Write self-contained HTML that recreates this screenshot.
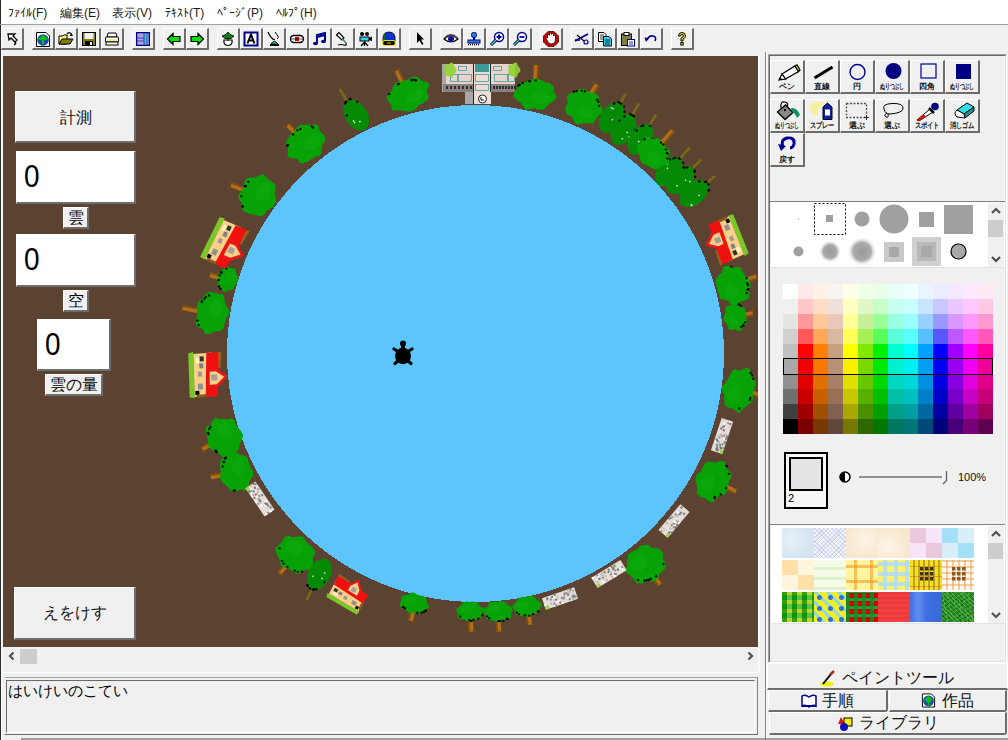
<!DOCTYPE html><html><head><meta charset="utf-8"><style>
*{margin:0;padding:0;box-sizing:border-box}
html,body{width:1008px;height:740px;overflow:hidden;background:#f0f0f0;font-family:"Liberation Sans",sans-serif;position:relative}
div{position:absolute}
.mi{top:6px;font-size:12px;color:#1a1a1a;white-space:nowrap;line-height:14px}
.tb{top:28px;width:23px;height:22px;background:#f0f0f0;border-style:solid;border-width:1px 2px 2px 1px;border-color:#fff #6d6d6d #6d6d6d #fff}
.tb svg{position:absolute;left:2px;top:2px}
.b3{background:#f0f0f0;border-style:solid;border-width:1px 2px 2px 1px;border-color:#fff #6d6d6d #6d6d6d #fff}
.tbox{background:#fff;border-style:solid;border-width:1px 2px 2px 1px;border-color:#fff #6d6d6d #6d6d6d #fff}
.lbl{font-size:16px;color:#000;text-align:center;line-height:21px}
.zero{font-size:31px;color:#000;line-height:30px;transform:scaleX(0.9);transform-origin:0 0}
.tool{width:35px;height:34px;background:#f0f0f0;border-style:solid;border-width:1px 2px 2px 1px;border-color:#fff #6d6d6d #6d6d6d #fff}
.tool svg{position:absolute;left:6px;top:1px;overflow:visible}
.tl{position:absolute;left:0px;width:32px;top:20px;text-align:center;font-size:8px;font-weight:bold;color:#111;line-height:11px;white-space:nowrap}.tl span{position:absolute;left:50%;top:0;white-space:nowrap}
.tab{background:#f0f0f0;border-style:solid;border-color:#fff #6d6d6d #6d6d6d #fff;font-size:16px;color:#111;line-height:20px;white-space:nowrap}
</style></head><body>
<div style="left:0;top:0;width:1px;height:740px;background:#2a2a2a"></div>
<div style="left:1px;top:25px;width:1px;height:715px;background:#fff"></div>
<div style="left:1px;top:0;width:1007px;height:24px;background:#fff"></div>
<div style="left:0;top:24px;width:1008px;height:1px;background:#a0a0a0"></div>
<div class="mi" style="left:8px;width:46px;overflow:hidden">ﾌｧｲﾙ(F)</div>
<div class="mi" style="left:60px;width:46px;overflow:hidden">編集(E)</div>
<div class="mi" style="left:112px;width:46px;overflow:hidden">表示(V)</div>
<div class="mi" style="left:165px;width:46px;overflow:hidden">ﾃｷｽﾄ(T)</div>
<div class="mi" style="left:217px;width:52px;overflow:hidden">ﾍﾟｰｼﾞ(P)</div>
<div class="mi" style="left:276px;width:46px;overflow:hidden">ﾍﾙﾌﾟ(H)</div>
<div class="tb" style="left:1px"><svg width="16" height="16" viewBox="0 0 16 16"><path d="M4 3 L11 3 L9 5 L13 9 L11 11 L7 7 L5 9 Z" fill="#fff" stroke="#000" stroke-width="1.3"/><path d="M11 11 Q13 12 10 14" fill="none" stroke="#000" stroke-width="1.3"/></svg></div>
<div class="tb" style="left:32px"><svg width="16" height="16" viewBox="0 0 16 16"><path d="M1.5 1.5 H11 L14.5 5 V15.5 H1.5 Z" fill="#fff" stroke="#000"/><circle cx="8" cy="9" r="5.8" fill="#1a4fb0"/><path d="M2.5 8 Q5 6 8 4 Q11 6 13.5 8 Q11 9 9 9 V13 H7 V9 Q5 9 2.5 8Z" fill="#10c010"/></svg></div>
<div class="tb" style="left:55px"><svg width="16" height="16" viewBox="0 0 16 16"><path d="M1 5 H5 L6 4 H9 V13 H1 Z" fill="#ffff80" stroke="#000"/><path d="M1 13 L4 8 H15 L12 13 Z" fill="#808000" stroke="#000"/><path d="M9 3 Q12 0 14 4" fill="none" stroke="#000" stroke-width="1.2"/><path d="M13 2 L15 5 L12 5 Z" fill="#000"/></svg></div>
<div class="tb" style="left:78px"><svg width="16" height="16" viewBox="0 0 16 16"><rect x="1.5" y="1.5" width="13" height="13" fill="#808000" stroke="#000"/><rect x="3.5" y="2" width="9" height="6" fill="#f0f0f0"/><rect x="4" y="10" width="8" height="4.5" fill="#000"/><rect x="9" y="11" width="2" height="3" fill="#f0f0f0"/></svg></div>
<div class="tb" style="left:101px"><svg width="16" height="16" viewBox="0 0 16 16"><path d="M4 2 H12 L13 6 H3 Z" fill="#fff" stroke="#000"/><rect x="1.5" y="6" width="13" height="5" rx="1" fill="#fff" stroke="#000"/><rect x="3" y="8.5" width="10" height="1" fill="#e0e000"/><rect x="2" y="11" width="12" height="3" fill="#fff" stroke="#000"/></svg></div>
<div class="tb" style="left:132px"><svg width="16" height="16" viewBox="0 0 16 16"><rect x="1.5" y="1.5" width="13" height="13" fill="#4040a0" stroke="#000080"/><rect x="2.5" y="2.5" width="6" height="4" fill="#b0a0f0"/><rect x="2.5" y="7.5" width="6" height="2" fill="#b0a0f0"/><rect x="2.5" y="10.5" width="6" height="3" fill="#b0a0f0"/><rect x="9.5" y="2.5" width="2" height="11" fill="#30c0f0"/><rect x="12" y="2.5" width="2" height="11" fill="#7080c0"/></svg></div>
<div class="tb" style="left:163px"><svg width="16" height="16" viewBox="0 0 16 16"><path d="M1.5 8 L7 2.5 V5.5 H14 V10.5 H7 V13.5 Z" fill="#00e000" stroke="#000" stroke-width="1.2"/></svg></div>
<div class="tb" style="left:186px"><svg width="16" height="16" viewBox="0 0 16 16"><path d="M14.5 8 L9 2.5 V5.5 H2 V10.5 H9 V13.5 Z" fill="#00e000" stroke="#000" stroke-width="1.2"/></svg></div>
<div class="tb" style="left:217px"><svg width="16" height="16" viewBox="0 0 16 16"><path d="M8 1 L10 3.5 L14 5 L11 7.5 H5 L2 5 L6 3.5 Z" fill="#108010" stroke="#000" stroke-width="0.8"/><path d="M4 9 Q3 14 8 14.5 Q13 14 12 9 Z" fill="#fff" stroke="#000" stroke-width="1.2"/><path d="M8 7 V10" stroke="#000"/></svg></div>
<div class="tb" style="left:240px"><svg width="16" height="16" viewBox="0 0 16 16"><rect x="1.5" y="1.5" width="13" height="13" fill="#fff" stroke="#000090" stroke-width="2"/><path d="M4.5 12.5 L8 3.5 L11.5 12.5 M6 9.5 H10" fill="none" stroke="#000" stroke-width="2"/></svg></div>
<div class="tb" style="left:263px"><svg width="16" height="16" viewBox="0 0 16 16"><path d="M2 1 Q5 8 9 9" fill="none" stroke="#000" stroke-width="1.2"/><path d="M9 1 L12 5 Q13 7 11 8" fill="none" stroke="#000"/><path d="M5 13 Q8 8 12 13 Z" fill="#30d0f0" stroke="#000"/><rect x="4" y="13" width="9" height="2" fill="#000"/></svg></div>
<div class="tb" style="left:286px"><svg width="16" height="16" viewBox="0 0 16 16"><rect x="1.5" y="4.5" width="13" height="7" rx="3.5" fill="#fff" stroke="#000" stroke-width="1.4"/><rect x="6" y="6" width="4" height="4" fill="#e00000"/><path d="M1.5 8 H14.5" stroke="#000" stroke-width="0.7"/></svg></div>
<div class="tb" style="left:309px"><svg width="16" height="16" viewBox="0 0 16 16"><path d="M5 12 V4 L13 2 V10" fill="none" stroke="#000090" stroke-width="2"/><ellipse cx="3.5" cy="12.5" rx="2.5" ry="1.8" fill="#000090"/><ellipse cx="11.5" cy="10.5" rx="2.5" ry="1.8" fill="#000090"/><path d="M5 6 L13 4" stroke="#000090" stroke-width="2"/></svg></div>
<div class="tb" style="left:332px"><svg width="16" height="16" viewBox="0 0 16 16"><path d="M1.5 4 L4 1.5 L9 7 L7 9 Z" fill="#fff" stroke="#000" stroke-width="1.2"/><path d="M7.5 8 L11 12" stroke="#3080a0" stroke-width="1.5"/><path d="M11 12 Q12 15 9 14 Q6 13 3 14" fill="none" stroke="#000" stroke-width="1.2"/></svg></div>
<div class="tb" style="left:355px"><svg width="16" height="16" viewBox="0 0 16 16"><circle cx="4" cy="3" r="2" fill="#000"/><circle cx="9" cy="3" r="2" fill="#000"/><rect x="2" y="6" width="9" height="4" fill="#30d0f0" stroke="#000"/><path d="M11 7 L14 5.5 V10 L11 9 Z" fill="#000"/><path d="M6.5 10 V15 M6.5 11 L3 15 M6.5 11 L10 15" stroke="#000" stroke-width="1.2"/></svg></div>
<div class="tb" style="left:378px"><svg width="16" height="16" viewBox="0 0 16 16"><path d="M2 10 Q1 1 8 1 Q15 1 14 10 Z" fill="#1030d0" stroke="#000" stroke-width="0.8"/><path d="M2 9 Q1.5 4 4 3 V9 Z" fill="#107010"/><rect x="1.5" y="9.5" width="13" height="5" rx="2.5" fill="#000" stroke="#e8e000" stroke-width="1.2"/><rect x="6" y="11.5" width="4" height="1" fill="#e8e000"/></svg></div>
<div class="tb" style="left:409px"><svg width="16" height="16" viewBox="0 0 16 16"><path d="M5 1 L5 12 L7.5 9.5 L10 14 L11.5 13 L9 8.5 L12 8.5 Z" fill="#000"/></svg></div>
<div class="tb" style="left:440px"><svg width="16" height="16" viewBox="0 0 16 16"><path d="M1 8 Q8 1 15 8 Q8 14 1 8 Z" fill="#fff" stroke="#000" stroke-width="1.2"/><circle cx="8" cy="8" r="3" fill="#1010a0"/><path d="M2 7 Q8 1 14 7" fill="none" stroke="#404040" stroke-width="2"/></svg></div>
<div class="tb" style="left:463px"><svg width="16" height="16" viewBox="0 0 16 16"><rect x="5.5" y="1.5" width="5" height="5" rx="2" fill="#3080d0" stroke="#000090"/><rect x="7" y="6" width="2" height="3" fill="#000090"/><rect x="2" y="9" width="12" height="3" fill="#3080d0" stroke="#000090"/><path d="M2 13.5 H14" stroke="#000" stroke-width="1.5" stroke-dasharray="1 1"/></svg></div>
<div class="tb" style="left:486px"><svg width="16" height="16" viewBox="0 0 16 16"><circle cx="10" cy="6" r="4.5" fill="#fff" stroke="#000090" stroke-width="1.5"/><path d="M7.5 6 H12.5 M10 3.5 V8.5" stroke="#000090" stroke-width="1.8"/><path d="M7 9 L2 14" stroke="#000" stroke-width="3"/><path d="M7 9 L2 14" stroke="#30c0f0" stroke-width="1.5"/></svg></div>
<div class="tb" style="left:509px"><svg width="16" height="16" viewBox="0 0 16 16"><circle cx="10" cy="6" r="4.5" fill="#fff" stroke="#000090" stroke-width="1.5"/><path d="M7.5 6 H12.5" stroke="#000090" stroke-width="1.8"/><path d="M7 9 L2 14" stroke="#000" stroke-width="3"/><path d="M7 9 L2 14" stroke="#30c0f0" stroke-width="1.5"/></svg></div>
<div class="tb" style="left:540px"><svg width="16" height="16" viewBox="0 0 16 16"><path d="M5 0.5 H11 L15.5 5 V11 L11 15.5 H5 L0.5 11 V5 Z" fill="#d00000" stroke="#400" stroke-width="0.8"/><path d="M4.5 7 V4.5 Q4.5 3.5 5.5 3.5 Q6.5 3.5 6.5 4.5 V3 Q6.5 2 7.5 2 Q8.5 2 8.5 3 V3.5 Q8.5 2.5 9.5 2.5 Q10.5 2.5 10.5 3.5 V5 Q10.5 4 11.5 4 Q12.5 4 12.5 5 V9 Q12.5 13 8.5 13 Q5 13 4.5 10 L3 7.5 Q3 6.5 4.5 7Z" fill="#fff" stroke="#000" stroke-width="0.8"/></svg></div>
<div class="tb" style="left:571px"><svg width="16" height="16" viewBox="0 0 16 16"><path d="M1 10 L14 3" stroke="#000090" stroke-width="1.8"/><path d="M3 4 L10 10" stroke="#000" stroke-width="1.2"/><circle cx="12" cy="11" r="2" fill="none" stroke="#000090" stroke-width="1.2"/><path d="M1 9 L6 9" stroke="#000090" stroke-width="1.5"/></svg></div>
<div class="tb" style="left:594px"><svg width="16" height="16" viewBox="0 0 16 16"><path d="M1.5 1.5 H7 L9 3.5 V10.5 H1.5 Z" fill="#fff" stroke="#000"/><path d="M3 4 H7 M3 6 H7 M3 8 H7" stroke="#000" stroke-width="0.8"/><path d="M6.5 5.5 H12 L14.5 8 V15 H6.5 Z" fill="#30d0f0" stroke="#000"/><path d="M8 9 H13 M8 11 H13 M8 13 H13" stroke="#000" stroke-width="0.8"/></svg></div>
<div class="tb" style="left:617px"><svg width="16" height="16" viewBox="0 0 16 16"><rect x="1.5" y="3" width="10" height="11.5" fill="#808040" stroke="#000"/><rect x="4" y="1.5" width="5" height="3" fill="#fff" stroke="#000"/><rect x="7.5" y="8.5" width="7" height="6.5" fill="#fff" stroke="#000090"/><path d="M9 11 H13 M9 13 H13" stroke="#000090" stroke-width="0.8"/></svg></div>
<div class="tb" style="left:640px"><svg width="16" height="16" viewBox="0 0 16 16"><path d="M4 9 Q6 4 10 5 Q14 6 12 10" fill="none" stroke="#000090" stroke-width="1.6"/><path d="M1.5 6.5 L6 7 L3 11 Z" fill="#000090"/></svg></div>
<div class="tb" style="left:671px"><svg width="16" height="16" viewBox="0 0 16 16"><path d="M4.5 5 Q4.5 1.5 8 1.5 Q11.5 1.5 11.5 5 Q11.5 7 9 8 V10 H7 V7 Q9.5 6 9.5 5 Q9.5 3.5 8 3.5 Q6.5 3.5 6.5 5 Z" fill="#f0f000" stroke="#000" stroke-width="1"/><rect x="6.8" y="11.5" width="2.4" height="2.5" fill="#f0f000" stroke="#000"/></svg></div>
<div style="left:3px;top:56px;width:755px;height:591px;background:#5c4331;overflow:hidden">
<svg style="position:absolute;left:0;top:0" width="755" height="591" viewBox="3 56 755 591">
<circle cx="475.5" cy="353.5" r="248.5" fill="#5dc5fe" shape-rendering="crispEdges"/>
<rect x="442" y="64" width="73" height="28" fill="#e8d4cc"/><rect x="442" y="64" width="4" height="28" fill="#a8a8a8"/><rect x="443" y="84" width="72" height="8" fill="#8a8080"/><rect x="446" y="86" width="2" height="3" fill="#303030"/><rect x="493" y="86" width="2" height="3" fill="#303030"/><rect x="450" y="86" width="2" height="3" fill="#303030"/><rect x="496" y="86" width="2" height="3" fill="#303030"/><rect x="454" y="86" width="2" height="3" fill="#303030"/><rect x="499" y="86" width="2" height="3" fill="#303030"/><rect x="458" y="86" width="2" height="3" fill="#303030"/><rect x="502" y="86" width="2" height="3" fill="#303030"/><rect x="462" y="86" width="2" height="3" fill="#303030"/><rect x="505" y="86" width="2" height="3" fill="#303030"/><rect x="466" y="86" width="2" height="3" fill="#303030"/><rect x="508" y="86" width="2" height="3" fill="#303030"/><rect x="470" y="86" width="2" height="3" fill="#303030"/><rect x="511" y="86" width="2" height="3" fill="#303030"/><rect x="474" y="86" width="2" height="3" fill="#303030"/><rect x="514" y="86" width="2" height="3" fill="#303030"/><g fill="none" stroke="#4a9a9a" stroke-width="0.8"><rect x="458.5" y="66.5" width="8" height="4"/><rect x="450.5" y="74.5" width="7" height="7"/><rect x="458.5" y="74.5" width="13" height="7"/><rect x="493.5" y="66.5" width="8" height="4"/><rect x="494.5" y="74.5" width="13" height="7"/><rect x="508.5" y="74.5" width="6" height="7"/></g><rect x="465" y="92" width="8" height="12" fill="#a8a8a8"/><rect x="473" y="64" width="18" height="40" fill="#ecdcd4"/><rect x="473" y="64" width="1" height="40" fill="#202020"/><rect x="490" y="64" width="1" height="28" fill="#202020"/><rect x="475" y="64" width="14" height="8" fill="#3a9a9a"/><circle cx="482.5" cy="99" r="4" fill="#fff" stroke="#222" stroke-width="1"/><g fill="none" stroke="#4a9a9a" stroke-width="0.8"><rect x="475.5" y="74.5" width="13" height="7"/><rect x="475.5" y="84.5" width="13" height="6"/></g><path d="M481 97 L481 100 L484 100" stroke="#000" fill="none"/><path d="M456.7 70.0 L456.2 71.6 L455.1 72.9 L454.2 73.9 L453.5 75.1 L452.7 76.6 L451.5 77.8 L450.0 77.0 L448.8 76.0 L447.6 75.9 L446.2 75.5 L444.7 75.0 L444.1 73.3 L444.3 71.5 L444.9 70.0 L444.5 68.5 L444.1 66.7 L444.7 65.1 L446.0 64.2 L447.6 64.1 L448.9 64.2 L450.0 63.0 L451.5 62.5 L452.8 63.1 L453.6 64.8 L454.3 66.0 L454.9 67.2 L456.2 68.4Z" fill="#90d030" opacity="0.9"/><path d="M520.5 70.0 L520.2 71.7 L518.9 72.8 L518.0 73.7 L517.5 75.2 L516.9 77.0 L515.5 77.8 L514.0 77.3 L512.8 76.0 L511.7 75.7 L510.3 75.4 L508.9 74.7 L508.3 73.2 L508.5 71.5 L508.5 70.0 L508.4 68.5 L508.2 66.7 L508.6 65.0 L510.2 64.4 L511.6 64.3 L512.8 63.9 L514.0 63.0 L515.5 62.3 L516.9 62.9 L517.6 64.7 L518.2 66.1 L519.0 67.2 L520.1 68.4Z" fill="#90d030" opacity="0.9"/>
<g transform="translate(408.0,94.0) rotate(-205.3)"><path d="M-2.5 0 L2.5 0 L2.5 26.2 L-2.5 26.2Z" fill="#b06e18"/><path d="M-2.5 6.6 L-1 6.6 L-1 26.2 L-2.5 26.2Z" fill="#7a4a10"/><path d="M2 25.2 L5 27.2" stroke="#7a4a10" stroke-width="1.5"/><path d="M20.5 0.0 L20.7 2.0 L21.2 4.2 L20.8 6.5 L18.3 8.0 L15.9 9.3 L12.8 10.0 L11.2 11.8 L9.3 13.7 L6.7 15.4 L3.2 15.0 L0.0 13.9 L-2.9 13.7 L-5.8 13.4 L-8.9 13.1 L-12.7 13.4 L-15.4 12.0 L-16.5 9.7 L-17.5 7.6 L-18.0 5.6 L-20.8 4.1 L-23.1 2.2 L-23.1 0.0 L-21.5 -2.4 L-18.9 -4.3 L-18.0 -6.3 L-17.7 -8.8 L-17.4 -11.6 L-15.5 -13.8 L-11.9 -14.3 L-8.9 -14.9 L-5.5 -14.4 L-3.0 -16.0 L-0.0 -17.0 L3.1 -16.8 L6.4 -16.9 L8.7 -14.7 L11.1 -13.3 L13.4 -11.9 L15.6 -10.4 L19.1 -9.5 L21.3 -7.5 L20.2 -4.6 L19.7 -2.2Z" fill="#06a206"/><path d="M9.8 0.0 L8.9 0.8 L8.9 1.6 L8.1 2.2 L8.4 3.2 L8.0 4.2 L6.4 4.4 L5.1 4.8 L3.8 5.0 L2.5 5.1 L1.4 5.8 L0.0 6.3 L-1.4 6.1 L-2.8 5.6 L-3.6 4.8 L-4.8 4.5 L-6.1 4.2 L-7.7 4.0 L-8.9 3.5 L-9.0 2.5 L-9.0 1.6 L-8.8 0.8 L-9.6 0.0 L-9.6 -0.9 L-9.7 -2.0 L-9.2 -2.9 L-8.0 -3.5 L-6.7 -4.0 L-5.8 -4.6 L-5.2 -5.6 L-4.2 -6.3 L-2.8 -6.5 L-1.4 -6.6 L-0.0 -6.0 L1.3 -6.4 L2.8 -6.6 L4.1 -6.2 L5.5 -5.8 L6.3 -5.0 L6.6 -3.9 L7.5 -3.3 L8.9 -2.8 L9.4 -1.9 L10.3 -1.0Z" transform="translate(-5.1,-4.0)" fill="#12b212" opacity="0.4"/><rect x="16" y="7" width="2" height="2" fill="#000"/><rect x="3" y="12" width="2" height="2" fill="#000"/><rect x="-13" y="9" width="2" height="2" fill="#000"/><rect x="-10" y="10" width="2" height="2" fill="#000"/><rect x="-11" y="10" width="2" height="2" fill="#000"/><rect x="4" y="12" width="2" height="2" fill="#000"/><rect x="-14" y="8" width="2" height="2" fill="#000"/></g>
<g transform="translate(305.0,142.5) rotate(-223.8)"><path d="M-2.5 0 L2.5 0 L2.5 24.6 L-2.5 24.6Z" fill="#b06e18"/><path d="M-2.5 7.4 L-1 7.4 L-1 24.6 L-2.5 24.6Z" fill="#7a4a10"/><path d="M2 23.6 L5 25.6" stroke="#7a4a10" stroke-width="1.5"/><path d="M22.0 0.0 L22.0 2.5 L19.6 4.6 L17.7 6.5 L15.9 8.2 L15.1 10.4 L14.1 13.0 L11.4 14.2 L8.5 14.9 L5.8 15.6 L2.7 14.9 L0.0 15.8 L-2.8 15.7 L-6.1 16.6 L-9.1 15.9 L-10.7 13.3 L-13.0 12.0 L-15.0 10.4 L-16.5 8.4 L-18.9 6.9 L-20.9 4.9 L-21.2 2.4 L-19.2 0.0 L-18.4 -2.4 L-19.0 -5.1 L-18.7 -7.7 L-18.0 -10.5 L-15.8 -12.4 L-12.9 -13.5 L-10.0 -14.1 L-7.9 -15.8 L-5.8 -17.8 L-3.1 -19.5 L-0.0 -19.1 L2.7 -17.3 L5.5 -17.1 L8.0 -16.0 L11.2 -15.8 L13.9 -14.5 L17.0 -13.3 L17.7 -10.3 L16.9 -7.0 L18.0 -4.8 L20.3 -2.6Z" fill="#06a206"/><path d="M8.9 0.0 L8.5 0.9 L8.1 1.7 L8.6 2.8 L8.4 3.8 L7.4 4.6 L5.8 4.8 L4.7 5.2 L3.5 5.5 L2.5 6.1 L1.4 7.0 L0.0 7.2 L-1.3 6.3 L-2.5 6.1 L-3.6 5.6 L-4.8 5.3 L-6.1 5.0 L-7.5 4.6 L-8.0 3.6 L-8.2 2.7 L-8.3 1.7 L-8.4 0.9 L-9.6 0.0 L-10.0 -1.2 L-9.6 -2.3 L-8.3 -3.1 L-6.9 -3.6 L-6.3 -4.4 L-5.8 -5.4 L-5.4 -6.8 L-4.0 -7.1 L-2.6 -7.1 L-1.3 -7.2 L-0.0 -6.8 L1.3 -7.2 L2.7 -7.4 L3.9 -7.0 L5.1 -6.4 L5.9 -5.5 L6.3 -4.4 L7.3 -3.8 L8.5 -3.1 L9.1 -2.2 L9.5 -1.1Z" transform="translate(-4.9,-4.4)" fill="#12b212" opacity="0.4"/><rect x="-4" y="13" width="2" height="2" fill="#000"/><rect x="14" y="9" width="2" height="2" fill="#000"/><rect x="-17" y="4" width="2" height="2" fill="#000"/><rect x="-17" y="6" width="2" height="2" fill="#000"/><rect x="2" y="13" width="2" height="2" fill="#000"/><rect x="-7" y="12" width="2" height="2" fill="#000"/><rect x="13" y="9" width="2" height="2" fill="#000"/></g>
<g transform="translate(257.0,195.0) rotate(-248.2)"><path d="M-2.5 0 L2.5 0 L2.5 28.0 L-2.5 28.0Z" fill="#b06e18"/><path d="M-2.5 7.6 L-1 7.6 L-1 28.0 L-2.5 28.0Z" fill="#7a4a10"/><path d="M2 27.0 L5 29.0" stroke="#7a4a10" stroke-width="1.5"/><path d="M20.4 0.0 L20.1 2.4 L20.3 4.9 L19.9 7.4 L17.1 9.0 L14.6 10.4 L12.5 11.8 L11.3 14.3 L9.1 16.3 L6.1 17.1 L2.8 16.1 L0.0 15.6 L-2.7 15.4 L-5.8 16.2 L-9.3 16.6 L-12.2 15.5 L-13.6 12.9 L-14.6 10.4 L-15.7 8.2 L-17.4 6.5 L-19.6 4.7 L-21.5 2.5 L-20.8 0.0 L-19.4 -2.6 L-18.8 -5.1 L-17.8 -7.6 L-17.6 -10.5 L-16.1 -13.0 L-13.5 -14.6 L-10.7 -15.6 L-7.7 -15.7 L-5.4 -17.2 L-3.0 -19.6 L-0.0 -20.4 L3.0 -19.5 L6.0 -19.0 L8.2 -16.8 L10.5 -15.2 L13.6 -14.6 L16.5 -13.3 L18.7 -11.2 L18.9 -8.0 L19.6 -5.3 L19.5 -2.6Z" fill="#06a206"/><path d="M9.5 0.0 L9.1 0.9 L8.2 1.7 L8.0 2.7 L8.0 3.7 L7.2 4.6 L6.3 5.3 L4.9 5.6 L3.6 5.8 L2.4 5.9 L1.3 6.6 L0.0 6.9 L-1.4 7.2 L-2.6 6.5 L-3.4 5.5 L-4.8 5.5 L-6.2 5.2 L-7.4 4.7 L-8.3 3.9 L-8.3 2.8 L-8.1 1.7 L-8.5 0.9 L-8.6 0.0 L-9.2 -1.1 L-9.2 -2.2 L-8.4 -3.2 L-7.5 -4.0 L-6.4 -4.6 L-5.9 -5.6 L-5.1 -6.5 L-4.1 -7.5 L-2.7 -7.7 L-1.3 -7.5 L-0.0 -7.1 L1.2 -6.9 L2.7 -7.6 L4.2 -7.6 L5.4 -7.0 L6.2 -5.9 L6.5 -4.6 L7.0 -3.7 L8.0 -3.0 L8.9 -2.2 L9.9 -1.2Z" transform="translate(-4.9,-4.6)" fill="#12b212" opacity="0.4"/><rect x="15" y="8" width="2" height="2" fill="#000"/><rect x="-5" y="13" width="2" height="2" fill="#000"/><rect x="15" y="8" width="2" height="2" fill="#000"/><rect x="-10" y="12" width="2" height="2" fill="#000"/><rect x="-5" y="13" width="2" height="2" fill="#000"/><rect x="6" y="13" width="2" height="2" fill="#000"/><rect x="-5" y="13" width="2" height="2" fill="#000"/></g>
<g transform="translate(227.0,279.0) rotate(-256.8)"><path d="M-2.5 0 L2.5 0 L2.5 17.5 L-2.5 17.5Z" fill="#b06e18"/><path d="M-2.5 4.2 L-1 4.2 L-1 17.5 L-2.5 17.5Z" fill="#7a4a10"/><path d="M2 16.5 L5 18.5" stroke="#7a4a10" stroke-width="1.5"/><path d="M13.1 0.0 L12.5 1.4 L11.6 2.6 L10.5 3.6 L9.4 4.6 L9.0 5.9 L8.7 7.6 L6.9 8.1 L5.0 8.2 L3.4 8.7 L1.6 8.5 L0.0 9.4 L-1.8 9.6 L-3.7 9.6 L-5.0 8.3 L-6.4 7.5 L-7.7 6.7 L-9.0 5.9 L-10.9 5.3 L-12.1 4.2 L-11.8 2.6 L-12.0 1.3 L-11.5 0.0 L-11.4 -1.4 L-11.5 -2.9 L-12.2 -4.8 L-10.8 -6.0 L-9.3 -6.9 L-7.7 -7.7 L-6.3 -8.5 L-5.3 -9.9 L-3.6 -10.6 L-1.9 -11.3 L-0.0 -10.6 L1.7 -10.2 L3.3 -9.7 L4.8 -9.1 L6.7 -9.0 L8.4 -8.3 L9.9 -7.3 L9.9 -5.4 L10.5 -4.1 L11.1 -2.8 L12.5 -1.5Z" fill="#06a206"/><path d="M5.7 0.0 L5.3 0.5 L4.8 0.9 L4.7 1.4 L4.8 2.1 L4.4 2.5 L3.8 3.0 L2.9 3.1 L2.1 3.2 L1.5 3.4 L0.8 3.8 L0.0 3.8 L-0.8 3.8 L-1.5 3.4 L-2.2 3.3 L-2.7 2.8 L-3.7 2.9 L-4.3 2.5 L-5.0 2.2 L-5.0 1.5 L-5.0 1.0 L-5.2 0.5 L-5.2 0.0 L-5.5 -0.6 L-5.8 -1.3 L-5.2 -1.8 L-4.3 -2.1 L-4.0 -2.7 L-3.6 -3.2 L-3.0 -3.5 L-2.4 -4.1 L-1.6 -4.1 L-0.8 -4.0 L-0.0 -4.0 L0.7 -3.8 L1.6 -4.1 L2.4 -3.9 L3.1 -3.6 L3.7 -3.3 L3.9 -2.6 L4.3 -2.1 L5.0 -1.7 L5.6 -1.2 L5.8 -0.6Z" transform="translate(-2.9,-2.5)" fill="#12b212" opacity="0.4"/><rect x="-11" y="2" width="2" height="2" fill="#000"/><rect x="2" y="7" width="2" height="2" fill="#000"/><rect x="-6" y="6" width="2" height="2" fill="#000"/><rect x="-6" y="6" width="2" height="2" fill="#000"/><rect x="8" y="5" width="2" height="2" fill="#000"/><rect x="10" y="3" width="2" height="2" fill="#000"/><rect x="-3" y="7" width="2" height="2" fill="#000"/></g>
<g transform="translate(211.0,313.0) rotate(-259.6)"><path d="M-2.5 0 L2.5 0 L2.5 28.9 L-2.5 28.9Z" fill="#b06e18"/><path d="M-2.5 6.8 L-1 6.8 L-1 28.9 L-2.5 28.9Z" fill="#7a4a10"/><path d="M2 27.9 L5 29.9" stroke="#7a4a10" stroke-width="1.5"/><path d="M21.7 0.0 L21.5 2.2 L19.1 4.0 L17.1 5.6 L16.5 7.6 L16.5 10.2 L14.9 12.3 L12.2 13.6 L8.5 13.3 L5.6 13.6 L2.7 13.6 L0.0 14.4 L-3.0 15.1 L-6.2 15.0 L-9.2 14.4 L-11.1 12.3 L-13.1 10.8 L-15.7 9.7 L-17.8 8.2 L-20.1 6.6 L-21.0 4.4 L-20.5 2.1 L-20.1 0.0 L-20.4 -2.4 L-19.8 -4.7 L-20.5 -7.6 L-18.8 -9.8 L-15.7 -11.0 L-12.5 -11.7 L-10.6 -13.4 L-8.4 -14.9 L-6.4 -17.8 L-3.3 -18.4 L-0.0 -17.2 L2.8 -15.7 L5.7 -15.7 L8.6 -15.2 L12.2 -15.4 L15.0 -14.1 L16.3 -11.5 L16.8 -8.8 L17.8 -6.6 L19.2 -4.6 L20.7 -2.4Z" fill="#06a206"/><path d="M10.2 0.0 L9.8 0.9 L9.0 1.7 L7.8 2.3 L7.4 3.0 L7.0 3.9 L6.4 4.7 L5.5 5.4 L3.8 5.2 L2.5 5.4 L1.2 5.4 L0.0 5.9 L-1.4 6.2 L-2.9 6.3 L-4.0 5.6 L-4.6 4.6 L-5.6 4.1 L-6.8 3.7 L-8.5 3.5 L-9.4 2.7 L-9.5 1.8 L-9.2 0.8 L-8.9 0.0 L-9.3 -1.0 L-9.5 -2.0 L-9.0 -3.0 L-8.5 -4.0 L-7.0 -4.4 L-5.9 -4.9 L-4.8 -5.4 L-3.9 -6.2 L-2.8 -6.9 L-1.4 -7.1 L-0.0 -6.7 L1.2 -6.1 L2.5 -6.3 L4.0 -6.3 L5.5 -6.2 L6.7 -5.6 L7.3 -4.6 L7.7 -3.6 L7.7 -2.5 L8.9 -1.9 L9.6 -1.0Z" transform="translate(-5.0,-4.1)" fill="#12b212" opacity="0.4"/><rect x="-18" y="4" width="2" height="2" fill="#000"/><rect x="-16" y="7" width="2" height="2" fill="#000"/><rect x="-11" y="10" width="2" height="2" fill="#000"/><rect x="13" y="9" width="2" height="2" fill="#000"/><rect x="9" y="11" width="2" height="2" fill="#000"/><rect x="-10" y="10" width="2" height="2" fill="#000"/><rect x="-14" y="8" width="2" height="2" fill="#000"/></g>
<g transform="translate(223.0,437.0) rotate(60.3)"><path d="M-2.5 0 L2.5 0 L2.5 24.2 L-2.5 24.2Z" fill="#b06e18"/><path d="M-2.5 7.4 L-1 7.4 L-1 24.2 L-2.5 24.2Z" fill="#7a4a10"/><path d="M2 23.2 L5 25.2" stroke="#7a4a10" stroke-width="1.5"/><path d="M19.0 0.0 L18.3 2.2 L18.6 4.6 L18.5 7.1 L18.0 9.7 L14.7 10.7 L12.4 12.0 L10.1 13.3 L7.7 14.2 L5.7 16.3 L2.9 16.7 L0.0 17.2 L-2.7 15.8 L-5.2 14.7 L-7.6 14.0 L-10.0 13.0 L-13.1 12.7 L-15.4 11.2 L-17.1 9.3 L-17.2 6.6 L-16.8 4.1 L-19.1 2.3 L-19.6 0.0 L-20.7 -2.8 L-18.7 -5.2 L-16.4 -7.1 L-15.7 -9.6 L-13.7 -11.3 L-12.7 -14.0 L-11.6 -17.2 L-8.7 -18.2 L-5.3 -17.2 L-2.7 -17.8 L-0.0 -17.5 L2.8 -18.6 L5.7 -18.4 L8.8 -18.5 L10.7 -15.9 L12.5 -13.7 L14.1 -11.7 L15.7 -9.7 L18.3 -8.0 L19.4 -5.4 L19.2 -2.6Z" fill="#06a206"/><path d="M9.2 0.0 L9.3 1.0 L8.9 2.0 L7.5 2.6 L6.7 3.2 L6.4 4.2 L5.9 5.1 L5.0 5.8 L3.9 6.3 L2.4 6.1 L1.2 6.2 L0.0 5.9 L-1.2 6.3 L-2.7 6.8 L-3.8 6.2 L-4.6 5.4 L-5.5 4.8 L-6.2 4.0 L-7.0 3.4 L-8.4 2.8 L-9.1 2.0 L-8.6 0.9 L-8.5 0.0 L-7.8 -0.9 L-8.0 -2.0 L-7.9 -3.1 L-7.7 -4.2 L-7.1 -5.2 L-5.5 -5.4 L-4.6 -6.0 L-3.4 -6.4 L-2.5 -7.3 L-1.4 -8.0 L-0.0 -7.9 L1.2 -7.1 L2.3 -6.7 L3.4 -6.4 L4.6 -6.0 L5.8 -5.7 L7.2 -5.3 L7.5 -4.1 L7.3 -2.8 L7.8 -1.9 L8.2 -1.0Z" transform="translate(-4.7,-4.4)" fill="#12b212" opacity="0.4"/><rect x="-15" y="7" width="2" height="2" fill="#000"/><rect x="7" y="12" width="2" height="2" fill="#000"/><rect x="-12" y="10" width="2" height="2" fill="#000"/><rect x="-16" y="5" width="2" height="2" fill="#000"/><rect x="9" y="12" width="2" height="2" fill="#000"/><rect x="-11" y="10" width="2" height="2" fill="#000"/><rect x="8" y="12" width="2" height="2" fill="#000"/></g>
<g transform="translate(235.0,472.0) rotate(78.3)"><path d="M-2.5 0 L2.5 0 L2.5 24.7 L-2.5 24.7Z" fill="#b06e18"/><path d="M-2.5 6.8 L-1 6.8 L-1 24.7 L-2.5 24.7Z" fill="#7a4a10"/><path d="M2 23.7 L5 25.7" stroke="#7a4a10" stroke-width="1.5"/><path d="M19.0 0.0 L19.0 2.1 L19.3 4.3 L18.6 6.4 L17.7 8.5 L14.7 9.5 L12.4 10.8 L10.1 11.8 L8.6 14.1 L5.9 15.0 L3.1 16.0 L0.0 15.2 L-2.6 13.8 L-5.3 13.5 L-8.3 13.7 L-11.1 13.0 L-13.9 12.1 L-15.6 10.2 L-15.6 7.5 L-17.3 5.9 L-18.9 4.2 L-21.0 2.3 L-21.0 0.0 L-19.7 -2.4 L-18.9 -4.8 L-17.3 -6.7 L-15.9 -8.8 L-14.9 -11.0 L-13.6 -13.4 L-11.4 -15.2 L-8.0 -15.0 L-5.4 -15.8 L-2.7 -16.0 L-0.0 -16.6 L3.0 -18.1 L5.9 -17.1 L8.6 -16.1 L10.5 -14.0 L12.2 -12.0 L15.0 -11.1 L17.8 -9.8 L19.8 -7.7 L20.3 -5.1 L18.1 -2.2Z" fill="#06a206"/><path d="M8.3 0.0 L9.3 0.9 L9.0 1.8 L8.8 2.7 L7.1 3.0 L6.5 3.8 L5.7 4.4 L5.1 5.3 L4.1 6.0 L2.6 5.9 L1.3 5.8 L0.0 5.7 L-1.2 5.5 L-2.5 5.6 L-3.8 5.6 L-5.3 5.5 L-6.1 4.7 L-6.6 3.8 L-6.8 2.9 L-8.2 2.5 L-9.0 1.8 L-9.3 0.9 L-9.2 0.0 L-8.5 -0.9 L-7.7 -1.7 L-7.8 -2.7 L-7.6 -3.7 L-7.3 -4.8 L-6.4 -5.6 L-4.8 -5.7 L-3.4 -5.7 L-2.5 -6.4 L-1.3 -7.0 L-0.0 -7.2 L1.4 -7.4 L2.4 -6.3 L3.4 -5.7 L4.4 -5.2 L6.0 -5.2 L7.2 -4.7 L8.2 -4.0 L8.2 -2.8 L8.2 -1.8 L8.5 -0.9Z" transform="translate(-4.8,-4.1)" fill="#12b212" opacity="0.4"/><rect x="-9" y="10" width="2" height="2" fill="#000"/><rect x="-16" y="6" width="2" height="2" fill="#000"/><rect x="17" y="3" width="2" height="2" fill="#000"/><rect x="-17" y="5" width="2" height="2" fill="#000"/><rect x="-13" y="8" width="2" height="2" fill="#000"/><rect x="17" y="4" width="2" height="2" fill="#000"/><rect x="-13" y="8" width="2" height="2" fill="#000"/></g>
<g transform="translate(295.0,555.0) rotate(40.7)"><path d="M-2.5 0 L2.5 0 L2.5 23.8 L-2.5 23.8Z" fill="#b06e18"/><path d="M-2.5 7.4 L-1 7.4 L-1 23.8 L-2.5 23.8Z" fill="#7a4a10"/><path d="M2 22.8 L5 24.8" stroke="#7a4a10" stroke-width="1.5"/><path d="M20.6 0.0 L20.2 2.4 L17.5 4.2 L16.9 6.3 L16.2 8.5 L15.1 10.7 L13.9 13.2 L10.7 13.6 L7.9 14.2 L5.0 14.0 L2.6 14.9 L0.0 16.6 L-3.1 17.6 L-5.7 15.9 L-7.9 14.2 L-10.2 12.9 L-12.8 12.1 L-15.2 10.8 L-17.6 9.3 L-19.9 7.4 L-18.5 4.4 L-19.1 2.3 L-18.3 0.0 L-18.9 -2.5 L-19.5 -5.3 L-19.0 -8.1 L-17.5 -10.5 L-14.0 -11.3 L-12.2 -13.1 L-10.5 -15.2 L-8.5 -17.2 L-6.0 -19.1 L-2.8 -18.4 L-0.0 -17.4 L2.6 -16.6 L5.4 -17.1 L8.3 -17.0 L11.3 -16.4 L13.8 -14.9 L14.9 -12.0 L15.4 -9.2 L17.4 -7.4 L19.3 -5.3 L20.4 -2.7Z" fill="#06a206"/><path d="M9.5 0.0 L8.8 0.9 L8.0 1.7 L7.6 2.5 L7.6 3.5 L7.0 4.4 L6.3 5.3 L4.7 5.4 L3.5 5.5 L2.3 5.7 L1.2 6.1 L0.0 6.9 L-1.3 6.8 L-2.7 6.6 L-3.7 6.0 L-4.4 5.0 L-5.8 4.9 L-7.1 4.5 L-8.1 3.8 L-8.3 2.7 L-8.5 1.8 L-8.4 0.9 L-8.3 0.0 L-8.7 -1.0 L-9.0 -2.2 L-8.5 -3.2 L-7.8 -4.1 L-6.3 -4.5 L-5.4 -5.2 L-4.8 -6.2 L-4.0 -7.3 L-2.7 -7.5 L-1.3 -7.3 L-0.0 -7.4 L1.2 -7.0 L2.5 -7.0 L3.8 -7.0 L5.1 -6.5 L6.0 -5.7 L6.5 -4.7 L7.0 -3.7 L7.4 -2.8 L8.8 -2.1 L9.6 -1.1Z" transform="translate(-4.8,-4.4)" fill="#12b212" opacity="0.4"/><rect x="12" y="10" width="2" height="2" fill="#000"/><rect x="-4" y="13" width="2" height="2" fill="#000"/><rect x="-17" y="4" width="2" height="2" fill="#000"/><rect x="-7" y="12" width="2" height="2" fill="#000"/><rect x="1" y="13" width="2" height="2" fill="#000"/><rect x="9" y="11" width="2" height="2" fill="#000"/><rect x="15" y="7" width="2" height="2" fill="#000"/></g>
<g transform="translate(414.0,604.0) rotate(11.3)"><path d="M-2.5 0 L2.5 0 L2.5 17.3 L-2.5 17.3Z" fill="#b06e18"/><path d="M-2.5 4.2 L-1 4.2 L-1 17.3 L-2.5 17.3Z" fill="#7a4a10"/><path d="M2 16.3 L5 18.3" stroke="#7a4a10" stroke-width="1.5"/><path d="M15.8 0.0 L14.4 1.3 L13.7 2.6 L11.7 3.5 L11.1 4.6 L11.3 6.3 L9.7 7.3 L8.3 8.3 L5.9 8.4 L3.8 8.3 L1.9 8.5 L0.0 8.9 L-2.2 9.8 L-4.2 9.2 L-5.9 8.4 L-7.1 7.1 L-8.5 6.4 L-10.4 5.8 L-12.8 5.3 L-13.8 4.1 L-13.9 2.6 L-13.5 1.3 L-13.9 0.0 L-12.9 -1.4 L-14.0 -3.0 L-13.7 -4.6 L-12.8 -6.1 L-10.6 -6.8 L-8.9 -7.6 L-7.2 -8.3 L-6.0 -9.6 L-4.4 -11.0 L-2.2 -11.1 L-0.0 -10.4 L1.9 -9.5 L3.9 -9.7 L5.8 -9.3 L7.9 -9.0 L10.3 -8.8 L11.2 -7.1 L11.8 -5.6 L12.5 -4.2 L12.9 -2.8 L14.3 -1.5Z" fill="#06a206"/><path d="M6.6 0.0 L6.2 0.5 L5.7 1.0 L5.9 1.6 L5.8 2.1 L5.2 2.6 L4.2 2.8 L3.2 2.9 L2.5 3.1 L1.8 3.5 L0.9 3.7 L0.0 4.0 L-0.9 3.7 L-1.8 3.5 L-2.6 3.2 L-3.3 2.9 L-4.5 3.0 L-5.0 2.5 L-5.8 2.2 L-6.0 1.6 L-5.6 0.9 L-6.1 0.5 L-6.5 0.0 L-7.0 -0.7 L-6.4 -1.2 L-5.9 -1.8 L-5.3 -2.2 L-4.6 -2.6 L-4.1 -3.1 L-3.5 -3.6 L-2.9 -4.2 L-1.9 -4.1 L-0.9 -4.2 L-0.0 -3.8 L0.9 -4.1 L1.9 -4.2 L2.9 -4.2 L3.5 -3.6 L4.1 -3.1 L4.4 -2.5 L5.2 -2.2 L5.8 -1.7 L6.8 -1.3 L6.7 -0.6Z" transform="translate(-3.4,-2.5)" fill="#12b212" opacity="0.4"/><rect x="11" y="4" width="2" height="2" fill="#000"/><rect x="-9" y="5" width="2" height="2" fill="#000"/><rect x="-11" y="4" width="2" height="2" fill="#000"/><rect x="4" y="7" width="2" height="2" fill="#000"/><rect x="8" y="6" width="2" height="2" fill="#000"/><rect x="10" y="5" width="2" height="2" fill="#000"/><rect x="12" y="3" width="2" height="2" fill="#000"/></g>
<g transform="translate(470.0,612.0) rotate(-2.9)"><path d="M-2.5 0 L2.5 0 L2.5 19.6 L-2.5 19.6Z" fill="#b06e18"/><path d="M-2.5 4.2 L-1 4.2 L-1 19.6 L-2.5 19.6Z" fill="#7a4a10"/><path d="M2 18.6 L5 20.6" stroke="#7a4a10" stroke-width="1.5"/><path d="M13.5 0.0 L12.2 1.2 L12.2 2.5 L11.2 3.6 L11.5 5.2 L11.0 6.7 L8.8 7.0 L7.0 7.6 L5.2 7.9 L3.4 8.1 L1.9 9.2 L0.0 10.0 L-2.0 9.6 L-3.8 9.0 L-5.0 7.7 L-6.6 7.1 L-8.4 6.7 L-10.6 6.4 L-12.3 5.5 L-12.3 3.9 L-12.4 2.5 L-12.1 1.2 L-13.2 0.0 L-13.3 -1.5 L-13.4 -3.1 L-12.6 -4.6 L-11.0 -5.6 L-9.3 -6.4 L-8.0 -7.3 L-7.2 -8.9 L-5.8 -10.0 L-3.9 -10.4 L-1.9 -10.5 L-0.0 -9.6 L1.8 -10.1 L3.9 -10.4 L5.6 -9.8 L7.5 -9.3 L8.7 -8.0 L9.1 -6.2 L10.4 -5.3 L12.3 -4.4 L13.0 -3.0 L14.1 -1.6Z" fill="#06a206"/><path d="M6.4 0.0 L6.2 0.6 L5.6 1.0 L5.1 1.4 L4.7 1.9 L4.4 2.4 L4.1 2.9 L3.4 3.3 L2.5 3.4 L1.6 3.4 L0.8 3.4 L0.0 3.6 L-0.9 3.9 L-1.8 3.9 L-2.7 3.6 L-3.1 3.0 L-3.6 2.5 L-4.4 2.3 L-5.1 2.0 L-5.7 1.6 L-6.1 1.1 L-6.0 0.5 L-5.8 0.0 L-5.4 -0.5 L-5.6 -1.2 L-5.5 -1.8 L-5.5 -2.5 L-4.5 -2.7 L-3.8 -3.1 L-3.0 -3.3 L-2.4 -3.8 L-1.8 -4.2 L-0.9 -4.6 L-0.0 -4.4 L0.8 -3.9 L1.5 -3.6 L2.4 -3.7 L3.4 -3.7 L4.1 -3.3 L4.8 -2.9 L5.0 -2.3 L4.9 -1.6 L5.3 -1.1 L6.0 -0.6Z" transform="translate(-3.2,-2.5)" fill="#12b212" opacity="0.4"/><rect x="7" y="6" width="2" height="2" fill="#000"/><rect x="2" y="7" width="2" height="2" fill="#000"/><rect x="-1" y="8" width="2" height="2" fill="#000"/><rect x="11" y="3" width="2" height="2" fill="#000"/><rect x="0" y="8" width="2" height="2" fill="#000"/><rect x="-11" y="3" width="2" height="2" fill="#000"/><rect x="-2" y="7" width="2" height="2" fill="#000"/></g>
<g transform="translate(498.0,612.0) rotate(-2.0)"><path d="M-2.5 0 L2.5 0 L2.5 19.6 L-2.5 19.6Z" fill="#b06e18"/><path d="M-2.5 4.4 L-1 4.4 L-1 19.6 L-2.5 19.6Z" fill="#7a4a10"/><path d="M2 18.6 L5 20.6" stroke="#7a4a10" stroke-width="1.5"/><path d="M13.9 0.0 L13.3 1.3 L12.7 2.5 L13.4 4.2 L13.1 5.7 L11.6 6.8 L9.1 7.1 L7.3 7.7 L5.5 8.1 L3.9 9.0 L2.2 10.4 L0.0 10.7 L-2.0 9.4 L-4.0 9.1 L-5.6 8.3 L-7.4 7.8 L-9.5 7.5 L-11.7 6.9 L-12.4 5.4 L-12.8 4.0 L-12.9 2.6 L-13.1 1.3 L-14.9 0.0 L-15.6 -1.7 L-14.9 -3.4 L-13.0 -4.6 L-10.8 -5.4 L-9.7 -6.5 L-9.1 -8.1 L-8.4 -10.1 L-6.2 -10.5 L-4.0 -10.5 L-2.0 -10.7 L-0.0 -10.1 L2.0 -10.7 L4.2 -11.0 L6.1 -10.4 L8.0 -9.6 L9.3 -8.2 L9.7 -6.5 L11.3 -5.6 L13.3 -4.7 L14.1 -3.2 L14.8 -1.6Z" fill="#06a206"/><path d="M6.2 0.0 L6.0 0.5 L6.1 1.1 L6.1 1.7 L6.0 2.3 L4.9 2.6 L3.9 2.7 L3.2 3.0 L2.5 3.3 L1.8 3.8 L1.0 4.0 L0.0 3.9 L-0.9 3.7 L-1.7 3.4 L-2.6 3.4 L-3.4 3.2 L-4.3 3.0 L-5.0 2.6 L-5.4 2.1 L-5.4 1.5 L-5.9 1.0 L-6.5 0.6 L-6.7 0.0 L-6.6 -0.6 L-6.4 -1.3 L-5.7 -1.8 L-5.0 -2.2 L-4.8 -2.8 L-4.3 -3.4 L-3.8 -4.1 L-2.8 -4.2 L-1.8 -4.2 L-0.9 -4.2 L-0.0 -4.1 L0.9 -4.5 L2.0 -4.6 L2.9 -4.3 L3.4 -3.6 L3.8 -3.0 L4.6 -2.7 L5.3 -2.3 L6.3 -2.0 L6.3 -1.3 L6.4 -0.6Z" transform="translate(-3.4,-2.6)" fill="#12b212" opacity="0.4"/><rect x="-12" y="3" width="2" height="2" fill="#000"/><rect x="4" y="8" width="2" height="2" fill="#000"/><rect x="-10" y="5" width="2" height="2" fill="#000"/><rect x="8" y="6" width="2" height="2" fill="#000"/><rect x="1" y="8" width="2" height="2" fill="#000"/><rect x="8" y="6" width="2" height="2" fill="#000"/><rect x="-1" y="8" width="2" height="2" fill="#000"/></g>
<g transform="translate(527.0,607.0) rotate(-8.5)"><path d="M-2.5 0 L2.5 0 L2.5 18.2 L-2.5 18.2Z" fill="#b06e18"/><path d="M-2.5 4.2 L-1 4.2 L-1 18.2 L-2.5 18.2Z" fill="#7a4a10"/><path d="M2 17.2 L5 19.2" stroke="#7a4a10" stroke-width="1.5"/><path d="M14.8 0.0 L14.1 1.3 L12.7 2.4 L12.5 3.7 L12.4 5.2 L11.3 6.3 L9.8 7.3 L7.6 7.7 L5.7 8.0 L3.7 8.1 L2.0 9.1 L0.0 9.5 L-2.2 9.9 L-4.1 9.0 L-5.4 7.6 L-7.5 7.6 L-9.6 7.2 L-11.5 6.4 L-12.9 5.4 L-12.9 3.8 L-12.5 2.4 L-13.2 1.2 L-13.4 0.0 L-14.3 -1.5 L-14.4 -3.1 L-13.0 -4.4 L-11.6 -5.5 L-10.0 -6.4 L-9.2 -7.8 L-7.9 -9.0 L-6.4 -10.3 L-4.2 -10.6 L-2.0 -10.4 L-0.0 -9.8 L1.9 -9.6 L4.2 -10.5 L6.5 -10.5 L8.4 -9.6 L9.6 -8.1 L10.1 -6.4 L10.9 -5.2 L12.5 -4.2 L13.9 -3.0 L15.4 -1.6Z" fill="#06a206"/><path d="M6.2 0.0 L6.6 0.5 L6.8 1.1 L6.1 1.6 L5.5 2.0 L4.7 2.4 L4.1 2.7 L3.5 3.1 L2.7 3.5 L1.9 3.8 L1.0 3.9 L0.0 3.4 L-0.8 3.4 L-1.8 3.6 L-2.8 3.5 L-3.6 3.3 L-4.3 2.9 L-4.9 2.4 L-5.0 1.8 L-5.5 1.5 L-6.4 1.1 L-6.9 0.6 L-6.8 0.0 L-6.1 -0.6 L-5.8 -1.1 L-5.3 -1.6 L-5.2 -2.2 L-5.0 -2.8 L-4.5 -3.4 L-3.4 -3.5 L-2.6 -3.7 L-1.6 -3.7 L-0.9 -4.0 L-0.0 -4.2 L1.0 -4.5 L1.9 -4.3 L2.5 -3.6 L3.2 -3.2 L3.9 -2.9 L5.1 -2.9 L5.7 -2.4 L5.9 -1.8 L6.1 -1.2 L6.0 -0.6Z" transform="translate(-3.4,-2.5)" fill="#12b212" opacity="0.4"/><rect x="-10" y="5" width="2" height="2" fill="#000"/><rect x="9" y="5" width="2" height="2" fill="#000"/><rect x="-12" y="3" width="2" height="2" fill="#000"/><rect x="0" y="8" width="2" height="2" fill="#000"/><rect x="4" y="7" width="2" height="2" fill="#000"/><rect x="-4" y="7" width="2" height="2" fill="#000"/><rect x="10" y="5" width="2" height="2" fill="#000"/></g>
<g transform="translate(646.0,565.0) rotate(-34.2)"><path d="M-2.5 0 L2.5 0 L2.5 24.2 L-2.5 24.2Z" fill="#b06e18"/><path d="M-2.5 7.8 L-1 7.8 L-1 24.2 L-2.5 24.2Z" fill="#7a4a10"/><path d="M2 23.2 L5 25.2" stroke="#7a4a10" stroke-width="1.5"/><path d="M20.5 0.0 L19.1 2.4 L17.2 4.4 L16.8 6.6 L17.2 9.5 L15.8 11.8 L13.8 13.8 L10.6 14.2 L7.8 14.7 L5.4 15.8 L2.9 17.5 L0.0 17.8 L-3.0 17.8 L-5.4 15.9 L-8.0 15.1 L-9.7 13.1 L-13.3 13.3 L-15.4 11.5 L-18.1 10.0 L-18.0 7.1 L-17.9 4.5 L-18.9 2.3 L-18.7 0.0 L-19.9 -2.8 L-21.0 -6.1 L-18.6 -8.3 L-15.6 -9.8 L-14.6 -12.4 L-13.0 -14.7 L-10.7 -16.4 L-8.8 -18.9 L-5.7 -19.0 L-2.7 -18.6 L-0.0 -18.4 L2.6 -17.8 L5.7 -19.2 L8.5 -18.2 L11.1 -16.9 L13.4 -15.1 L14.0 -11.9 L15.6 -9.8 L18.0 -8.1 L20.1 -5.8 L20.8 -2.9Z" fill="#06a206"/><path d="M9.6 0.0 L9.5 1.0 L8.7 2.0 L7.5 2.6 L7.2 3.5 L6.8 4.5 L6.1 5.4 L5.2 6.2 L3.8 6.3 L2.3 6.1 L1.2 6.2 L0.0 6.6 L-1.3 6.8 L-2.8 7.2 L-3.8 6.4 L-4.6 5.5 L-5.3 4.7 L-6.7 4.4 L-7.7 3.8 L-8.9 3.1 L-9.2 2.1 L-8.5 0.9 L-8.3 0.0 L-8.3 -1.0 L-8.2 -2.1 L-8.9 -3.5 L-8.0 -4.5 L-6.7 -5.1 L-5.7 -5.8 L-4.4 -5.9 L-3.7 -7.1 L-2.6 -7.7 L-1.4 -8.3 L-0.0 -8.0 L1.2 -7.5 L2.3 -6.8 L3.4 -6.5 L5.1 -6.9 L6.1 -6.2 L7.3 -5.5 L7.3 -4.1 L7.9 -3.2 L8.3 -2.1 L9.0 -1.1Z" transform="translate(-4.8,-4.7)" fill="#12b212" opacity="0.4"/><rect x="1" y="14" width="2" height="2" fill="#000"/><rect x="-7" y="13" width="2" height="2" fill="#000"/><rect x="-5" y="13" width="2" height="2" fill="#000"/><rect x="-9" y="12" width="2" height="2" fill="#000"/><rect x="-16" y="7" width="2" height="2" fill="#000"/><rect x="-11" y="11" width="2" height="2" fill="#000"/><rect x="14" y="8" width="2" height="2" fill="#000"/></g>
<g transform="translate(714.0,481.0) rotate(-63.4)"><path d="M-2.5 0 L2.5 0 L2.5 24.6 L-2.5 24.6Z" fill="#b06e18"/><path d="M-2.5 7.0 L-1 7.0 L-1 24.6 L-2.5 24.6Z" fill="#7a4a10"/><path d="M2 23.6 L5 25.6" stroke="#7a4a10" stroke-width="1.5"/><path d="M22.1 0.0 L21.3 2.3 L19.6 4.3 L16.8 5.8 L16.0 7.8 L15.3 10.0 L14.0 12.2 L11.8 13.9 L8.1 13.5 L5.4 13.9 L2.7 14.0 L0.0 15.1 L-3.1 16.0 L-6.3 16.1 L-8.6 14.3 L-10.0 11.8 L-12.2 10.6 L-14.7 9.6 L-18.4 8.9 L-20.3 7.0 L-20.6 4.6 L-20.0 2.2 L-19.4 0.0 L-20.1 -2.5 L-20.6 -5.2 L-19.5 -7.6 L-18.4 -10.2 L-15.1 -11.2 L-12.7 -12.6 L-10.5 -14.0 L-8.5 -16.0 L-6.0 -17.7 L-3.1 -18.3 L-0.0 -17.3 L2.6 -15.8 L5.5 -16.1 L8.6 -16.1 L12.0 -16.1 L14.5 -14.3 L15.8 -11.7 L16.7 -9.2 L16.7 -6.6 L19.3 -4.9 L20.8 -2.6Z" fill="#06a206"/><path d="M8.6 0.0 L9.0 0.9 L9.8 1.9 L8.5 2.6 L7.3 3.2 L6.6 3.8 L5.6 4.4 L5.2 5.4 L4.0 5.8 L2.8 6.5 L1.3 6.0 L0.0 5.8 L-1.3 5.9 L-2.6 6.0 L-4.2 6.1 L-5.4 5.6 L-5.9 4.6 L-6.8 4.0 L-7.2 3.1 L-8.0 2.5 L-8.9 1.8 L-10.0 1.0 L-9.6 0.0 L-9.1 -1.0 L-8.4 -1.9 L-8.3 -2.9 L-7.9 -3.9 L-7.5 -5.0 L-6.4 -5.6 L-4.8 -5.7 L-3.7 -6.2 L-2.4 -6.2 L-1.3 -7.1 L-0.0 -7.7 L1.4 -7.4 L2.5 -6.6 L3.7 -6.2 L4.7 -5.6 L5.8 -5.1 L7.0 -4.6 L8.3 -4.1 L8.3 -2.9 L8.8 -2.0 L8.5 -0.9Z" transform="translate(-4.9,-4.2)" fill="#12b212" opacity="0.4"/><rect x="18" y="4" width="2" height="2" fill="#000"/><rect x="-15" y="7" width="2" height="2" fill="#000"/><rect x="-10" y="11" width="2" height="2" fill="#000"/><rect x="18" y="3" width="2" height="2" fill="#000"/><rect x="-2" y="13" width="2" height="2" fill="#000"/><rect x="12" y="9" width="2" height="2" fill="#000"/><rect x="-16" y="7" width="2" height="2" fill="#000"/></g>
<g transform="translate(740.0,390.0) rotate(-75.4)"><path d="M-2.5 0 L2.5 0 L2.5 18.6 L-2.5 18.6Z" fill="#b06e18"/><path d="M-2.5 6.6 L-1 6.6 L-1 18.6 L-2.5 18.6Z" fill="#7a4a10"/><path d="M2 17.6 L5 19.6" stroke="#7a4a10" stroke-width="1.5"/><path d="M23.2 0.0 L23.5 2.2 L22.5 4.4 L18.9 5.7 L16.8 7.1 L16.2 9.3 L14.9 11.4 L12.5 12.9 L9.7 14.1 L6.0 13.6 L3.0 13.7 L0.0 13.3 L-3.1 14.1 L-6.8 15.2 L-9.6 13.9 L-11.7 12.0 L-13.9 10.6 L-15.7 9.0 L-17.7 7.5 L-21.0 6.4 L-22.8 4.4 L-21.7 2.1 L-21.3 0.0 L-19.5 -2.1 L-20.1 -4.4 L-20.0 -6.9 L-19.3 -9.3 L-17.9 -11.7 L-13.9 -12.1 L-11.5 -13.5 L-8.6 -14.2 L-6.3 -16.2 L-3.4 -17.9 L-0.0 -17.7 L3.0 -15.7 L5.8 -15.0 L8.6 -14.2 L11.5 -13.5 L14.7 -12.8 L18.2 -11.8 L18.7 -9.1 L18.5 -6.3 L19.5 -4.3 L20.7 -2.2Z" fill="#06a206"/><path d="M9.8 0.0 L10.3 0.9 L9.8 1.7 L9.5 2.6 L8.2 3.1 L7.0 3.6 L5.9 4.0 L5.2 4.8 L4.3 5.6 L2.9 5.8 L1.4 5.8 L0.0 5.3 L-1.3 5.2 L-2.8 5.5 L-4.3 5.5 L-5.7 5.2 L-6.8 4.6 L-7.1 3.6 L-7.4 2.8 L-8.8 2.4 L-9.8 1.7 L-10.6 0.9 L-10.4 0.0 L-10.0 -1.0 L-8.7 -1.7 L-8.7 -2.7 L-8.3 -3.6 L-8.0 -4.6 L-6.9 -5.3 L-5.3 -5.5 L-3.7 -5.5 L-2.6 -5.9 L-1.4 -6.6 L-0.0 -7.0 L1.5 -6.9 L2.9 -6.5 L3.8 -5.6 L4.8 -5.0 L6.2 -4.8 L7.9 -4.6 L8.7 -3.7 L9.0 -2.8 L8.9 -1.7 L8.7 -0.8Z" transform="translate(-5.3,-4.0)" fill="#12b212" opacity="0.4"/><rect x="13" y="9" width="2" height="2" fill="#000"/><rect x="18" y="5" width="2" height="2" fill="#000"/><rect x="-8" y="11" width="2" height="2" fill="#000"/><rect x="13" y="9" width="2" height="2" fill="#000"/><rect x="-6" y="11" width="2" height="2" fill="#000"/><rect x="16" y="7" width="2" height="2" fill="#000"/><rect x="-19" y="3" width="2" height="2" fill="#000"/></g>
<g transform="translate(736.0,317.0) rotate(-102.1)"><path d="M-2.5 0 L2.5 0 L2.5 17.2 L-2.5 17.2Z" fill="#b06e18"/><path d="M-2.5 4.8 L-1 4.8 L-1 17.2 L-2.5 17.2Z" fill="#7a4a10"/><path d="M2 16.2 L5 18.2" stroke="#7a4a10" stroke-width="1.5"/><path d="M12.8 0.0 L14.4 1.6 L13.8 3.1 L13.5 4.7 L10.8 5.3 L10.0 6.7 L8.7 7.7 L7.8 9.3 L6.3 10.6 L4.0 10.5 L1.9 10.3 L0.0 10.1 L-1.8 9.6 L-3.8 9.9 L-5.9 9.9 L-8.1 9.7 L-9.4 8.3 L-10.1 6.7 L-10.5 5.2 L-12.7 4.4 L-13.8 3.1 L-14.3 1.6 L-14.2 0.0 L-13.1 -1.6 L-11.8 -3.0 L-12.1 -4.8 L-11.7 -6.6 L-11.2 -8.4 L-9.8 -9.8 L-7.4 -10.1 L-5.3 -10.1 L-3.8 -11.2 L-2.0 -12.4 L-0.0 -12.7 L2.1 -13.0 L3.7 -11.1 L5.2 -10.0 L6.8 -9.2 L9.2 -9.3 L11.1 -8.4 L12.6 -7.0 L12.6 -5.0 L12.6 -3.2 L13.1 -1.6Z" fill="#06a206"/><path d="M6.0 0.0 L5.6 0.6 L6.2 1.2 L5.8 1.8 L5.6 2.5 L4.6 2.7 L3.9 3.1 L3.0 3.2 L2.6 3.8 L1.9 4.3 L1.0 4.6 L0.0 4.3 L-0.9 4.1 L-1.7 3.9 L-2.4 3.6 L-3.4 3.7 L-4.5 3.5 L-5.0 2.9 L-5.1 2.2 L-5.2 1.6 L-5.8 1.2 L-6.0 0.6 L-6.7 0.0 L-6.7 -0.7 L-5.8 -1.3 L-5.2 -1.8 L-4.8 -2.4 L-4.6 -3.1 L-4.2 -3.8 L-3.7 -4.4 L-2.7 -4.6 L-1.6 -4.3 L-0.8 -4.6 L-0.0 -4.5 L0.9 -4.8 L1.9 -5.0 L2.7 -4.6 L3.3 -4.0 L3.9 -3.5 L4.6 -3.1 L5.2 -2.6 L6.1 -2.2 L6.5 -1.5 L5.9 -0.7Z" transform="translate(-3.3,-2.9)" fill="#12b212" opacity="0.4"/><rect x="-11" y="4" width="2" height="2" fill="#000"/><rect x="9" y="6" width="2" height="2" fill="#000"/><rect x="11" y="4" width="2" height="2" fill="#000"/><rect x="11" y="4" width="2" height="2" fill="#000"/><rect x="-8" y="7" width="2" height="2" fill="#000"/><rect x="-10" y="5" width="2" height="2" fill="#000"/><rect x="-12" y="2" width="2" height="2" fill="#000"/></g>
<g transform="translate(734.0,285.0) rotate(-110.4)"><path d="M-2.5 0 L2.5 0 L2.5 24.1 L-2.5 24.1Z" fill="#b06e18"/><path d="M-2.5 7.0 L-1 7.0 L-1 24.1 L-2.5 24.1Z" fill="#7a4a10"/><path d="M2 23.1 L5 25.1" stroke="#7a4a10" stroke-width="1.5"/><path d="M20.5 0.0 L19.0 2.2 L17.4 4.1 L16.4 5.9 L16.4 8.4 L15.2 10.4 L13.7 12.5 L10.3 12.7 L7.5 13.1 L5.0 13.6 L2.6 14.4 L0.0 16.3 L-2.9 16.1 L-5.8 15.7 L-8.1 14.1 L-9.5 11.8 L-12.5 11.5 L-15.3 10.6 L-17.6 9.0 L-17.9 6.5 L-18.3 4.3 L-18.1 2.1 L-17.9 0.0 L-18.8 -2.4 L-19.4 -5.2 L-18.4 -7.6 L-16.8 -9.8 L-13.7 -10.7 L-11.8 -12.3 L-10.4 -14.6 L-8.7 -17.2 L-5.7 -17.7 L-2.7 -17.2 L-0.0 -17.5 L2.6 -16.6 L5.4 -16.6 L8.3 -16.4 L11.0 -15.4 L12.9 -13.4 L14.1 -11.0 L15.1 -8.8 L16.1 -6.6 L19.1 -5.1 L20.8 -2.7Z" fill="#06a206"/><path d="M9.5 0.0 L8.8 0.9 L7.6 1.6 L7.7 2.5 L7.4 3.4 L6.7 4.1 L6.3 5.1 L4.7 5.1 L3.4 5.2 L2.3 5.5 L1.2 6.0 L0.0 6.2 L-1.3 6.6 L-2.6 6.2 L-3.5 5.4 L-4.5 4.9 L-5.5 4.5 L-6.9 4.3 L-7.7 3.5 L-8.2 2.7 L-8.2 1.7 L-7.8 0.8 L-8.6 0.0 L-8.8 -1.0 L-8.6 -2.0 L-8.5 -3.1 L-7.3 -3.8 L-6.0 -4.2 L-5.2 -4.8 L-4.6 -5.8 L-3.7 -6.5 L-2.6 -7.2 L-1.3 -7.1 L-0.0 -6.5 L1.2 -6.7 L2.3 -6.3 L3.7 -6.4 L5.2 -6.5 L5.8 -5.4 L6.4 -4.4 L6.9 -3.5 L7.5 -2.8 L8.5 -2.0 L9.2 -1.1Z" transform="translate(-4.7,-4.2)" fill="#12b212" opacity="0.4"/><rect x="-13" y="8" width="2" height="2" fill="#000"/><rect x="-4" y="12" width="2" height="2" fill="#000"/><rect x="-10" y="11" width="2" height="2" fill="#000"/><rect x="17" y="3" width="2" height="2" fill="#000"/><rect x="-6" y="12" width="2" height="2" fill="#000"/><rect x="-10" y="10" width="2" height="2" fill="#000"/><rect x="1" y="13" width="2" height="2" fill="#000"/></g>
<g transform="translate(535.0,93.5) rotate(-177.2)"><path d="M-2.5 0 L2.5 0 L2.5 28.5 L-2.5 28.5Z" fill="#b06e18"/><path d="M-2.5 6.4 L-1 6.4 L-1 28.5 L-2.5 28.5Z" fill="#7a4a10"/><path d="M2 27.5 L5 29.5" stroke="#7a4a10" stroke-width="1.5"/><path d="M20.9 0.0 L19.8 2.0 L18.0 3.6 L18.8 5.9 L18.3 8.1 L16.7 10.0 L13.2 10.5 L10.1 10.9 L7.8 11.8 L5.7 13.4 L3.0 14.2 L0.0 15.1 L-3.0 14.3 L-5.7 13.5 L-8.2 12.4 L-10.4 11.2 L-14.1 11.3 L-15.9 9.5 L-18.5 8.2 L-18.9 6.0 L-17.8 3.6 L-19.3 1.9 L-20.5 0.0 L-22.1 -2.5 L-20.4 -4.7 L-18.8 -6.7 L-16.8 -8.5 L-14.6 -9.9 L-12.9 -11.7 L-11.2 -13.6 L-9.4 -16.1 L-5.9 -15.8 L-2.9 -15.9 L-0.0 -14.4 L2.9 -15.6 L6.1 -16.2 L9.3 -16.1 L11.1 -13.6 L13.0 -11.7 L13.8 -9.4 L16.6 -8.4 L18.5 -6.6 L21.5 -5.0 L21.2 -2.4Z" fill="#06a206"/><path d="M8.3 0.0 L8.4 0.7 L9.0 1.6 L8.6 2.4 L8.3 3.3 L7.1 3.8 L5.4 3.8 L4.7 4.5 L3.8 5.1 L2.8 5.8 L1.4 6.1 L0.0 5.9 L-1.2 5.3 L-2.5 5.2 L-3.8 5.1 L-5.4 5.1 L-6.2 4.4 L-7.4 3.9 L-7.3 2.9 L-7.5 2.1 L-8.5 1.5 L-9.5 0.8 L-10.1 0.0 L-9.4 -0.9 L-8.9 -1.8 L-7.5 -2.4 L-7.6 -3.4 L-6.9 -4.1 L-6.4 -5.1 L-5.1 -5.6 L-3.7 -5.6 L-2.3 -5.6 L-1.2 -6.0 L-0.0 -6.3 L1.4 -6.8 L2.8 -6.7 L3.9 -5.9 L4.9 -5.3 L5.4 -4.4 L6.9 -4.2 L7.8 -3.5 L9.2 -2.9 L9.1 -1.9 L8.8 -0.9Z" transform="translate(-4.9,-3.8)" fill="#12b212" opacity="0.4"/><rect x="12" y="9" width="2" height="2" fill="#000"/><rect x="15" y="7" width="2" height="2" fill="#000"/><rect x="5" y="11" width="2" height="2" fill="#000"/><rect x="15" y="7" width="2" height="2" fill="#000"/><rect x="5" y="11" width="2" height="2" fill="#000"/><rect x="16" y="6" width="2" height="2" fill="#000"/><rect x="-1" y="12" width="2" height="2" fill="#000"/></g>
<g transform="translate(584.0,106.0) rotate(-148.7)"><path d="M-2.5 0 L2.5 0 L2.5 25.0 L-2.5 25.0Z" fill="#b06e18"/><path d="M-2.5 7.2 L-1 7.2 L-1 25.0 L-2.5 25.0Z" fill="#7a4a10"/><path d="M2 24.0 L5 26.0" stroke="#7a4a10" stroke-width="1.5"/><path d="M19.7 0.0 L19.0 2.4 L17.3 4.4 L15.7 6.2 L14.4 8.0 L13.7 10.2 L12.6 12.5 L10.4 14.0 L7.7 14.5 L5.0 14.8 L2.4 14.4 L0.0 15.5 L-2.8 16.6 L-5.7 16.7 L-8.2 15.5 L-9.5 12.7 L-10.9 10.9 L-13.5 10.1 L-15.8 8.8 L-17.4 6.9 L-18.8 4.8 L-18.6 2.3 L-17.7 0.0 L-16.7 -2.3 L-17.3 -5.0 L-17.0 -7.6 L-17.0 -10.7 L-13.8 -11.7 L-11.6 -13.2 L-9.3 -14.2 L-7.5 -16.1 L-5.4 -18.0 L-2.9 -19.5 L-0.0 -18.7 L2.5 -16.9 L4.7 -15.5 L7.3 -15.7 L10.5 -16.0 L12.5 -14.2 L14.8 -12.5 L15.4 -9.7 L15.1 -6.8 L16.2 -4.7 L18.6 -2.6Z" fill="#06a206"/><path d="M8.0 0.0 L7.9 0.9 L7.5 1.7 L7.6 2.6 L7.6 3.8 L6.4 4.2 L5.2 4.6 L4.3 5.1 L3.2 5.4 L2.5 6.4 L1.3 6.7 L0.0 6.4 L-1.2 6.4 L-2.2 5.7 L-3.1 5.2 L-4.6 5.5 L-5.9 5.2 L-6.8 4.5 L-7.1 3.5 L-7.4 2.6 L-7.1 1.6 L-8.3 0.9 L-8.8 0.0 L-8.6 -1.1 L-8.2 -2.1 L-7.1 -2.8 L-6.5 -3.7 L-6.1 -4.6 L-5.6 -5.6 L-4.6 -6.3 L-3.6 -6.8 L-2.2 -6.6 L-1.1 -6.8 L-0.0 -7.1 L1.2 -7.4 L2.5 -7.4 L3.5 -6.8 L4.5 -6.1 L5.0 -5.0 L6.1 -4.6 L6.7 -3.8 L8.2 -3.3 L8.1 -2.1 L8.5 -1.1Z" transform="translate(-4.4,-4.3)" fill="#12b212" opacity="0.4"/><rect x="-9" y="11" width="2" height="2" fill="#000"/><rect x="13" y="8" width="2" height="2" fill="#000"/><rect x="15" y="6" width="2" height="2" fill="#000"/><rect x="6" y="12" width="2" height="2" fill="#000"/><rect x="-11" y="10" width="2" height="2" fill="#000"/><rect x="9" y="11" width="2" height="2" fill="#000"/><rect x="-14" y="7" width="2" height="2" fill="#000"/></g>
<path d="M347.6 101.8 L339.6 89.0" stroke="#7a6a18" stroke-width="2.5"/><g transform="translate(355.7,114.5) rotate(-122.3)"><path d="M-18 0 Q-15 -11 0 -11 Q14 -10 17 0 Q14 10 0 11 Q-15 11 -18 0Z" fill="#058a05"/><rect x="15" y="3" width="2" height="2" fill="#000"/><rect x="14" y="-4" width="2" height="2" fill="#000"/><rect x="3" y="-9" width="2" height="2" fill="#000"/><rect x="14" y="-4" width="2" height="2" fill="#000"/><rect x="9" y="7" width="2" height="2" fill="#000"/><rect x="15" y="-2" width="2" height="2" fill="#000"/><rect x="15" y="2" width="2" height="2" fill="#000"/><rect x="-9" y="-1" width="1.5" height="1.5" fill="#e0e0e0"/><rect x="-5" y="-6" width="1.5" height="1.5" fill="#e0e0e0"/><rect x="-7" y="-6" width="1.5" height="1.5" fill="#e0e0e0"/></g>
<path d="M618.8 105.5 L625.5 94.0" stroke="#7a6a18" stroke-width="2.5"/><g transform="translate(612,117) rotate(-59.6)"><path d="M-18 0 Q-15 -11 0 -11 Q14 -10 17 0 Q14 10 0 11 Q-15 11 -18 0Z" fill="#058a05"/><rect x="15" y="-3" width="2" height="2" fill="#000"/><rect x="10" y="7" width="2" height="2" fill="#000"/><rect x="15" y="-0" width="2" height="2" fill="#000"/><rect x="15" y="-1" width="2" height="2" fill="#000"/><rect x="11" y="-6" width="2" height="2" fill="#000"/><rect x="14" y="4" width="2" height="2" fill="#000"/><rect x="12" y="-6" width="2" height="2" fill="#000"/><rect x="7" y="-4" width="1.5" height="1.5" fill="#e0e0e0"/><rect x="7" y="-6" width="1.5" height="1.5" fill="#e0e0e0"/><rect x="-3" y="1" width="1.5" height="1.5" fill="#e0e0e0"/></g>
<path d="M631.4 116.2 L639.0 103.5" stroke="#7a6a18" stroke-width="2.5"/><g transform="translate(623.8,128.9) rotate(-59.1)"><path d="M-18 0 Q-15 -11 0 -11 Q14 -10 17 0 Q14 10 0 11 Q-15 11 -18 0Z" fill="#058a05"/><rect x="4" y="9" width="2" height="2" fill="#000"/><rect x="15" y="1" width="2" height="2" fill="#000"/><rect x="15" y="1" width="2" height="2" fill="#000"/><rect x="15" y="-1" width="2" height="2" fill="#000"/><rect x="10" y="-7" width="2" height="2" fill="#000"/><rect x="4" y="-9" width="2" height="2" fill="#000"/><rect x="15" y="-3" width="2" height="2" fill="#000"/><rect x="-2" y="4" width="1.5" height="1.5" fill="#e0e0e0"/><rect x="-5" y="8" width="1.5" height="1.5" fill="#e0e0e0"/><rect x="-10" y="3" width="1.5" height="1.5" fill="#e0e0e0"/></g>
<path d="M648.4 126.8 L656.0 114.5" stroke="#7a6a18" stroke-width="2.5"/><g transform="translate(640.7,139) rotate(-58.0)"><path d="M-18 0 Q-15 -11 0 -11 Q14 -10 17 0 Q14 10 0 11 Q-15 11 -18 0Z" fill="#058a05"/><rect x="4" y="-9" width="2" height="2" fill="#000"/><rect x="4" y="9" width="2" height="2" fill="#000"/><rect x="10" y="-7" width="2" height="2" fill="#000"/><rect x="3" y="9" width="2" height="2" fill="#000"/><rect x="5" y="9" width="2" height="2" fill="#000"/><rect x="12" y="-6" width="2" height="2" fill="#000"/><rect x="15" y="0" width="2" height="2" fill="#000"/><rect x="-4" y="-1" width="1.5" height="1.5" fill="#e0e0e0"/><rect x="4" y="5" width="1.5" height="1.5" fill="#e0e0e0"/><rect x="-7" y="1" width="1.5" height="1.5" fill="#e0e0e0"/></g>
<path d="M679.5 159.2 L689.7 147.4" stroke="#7a6a18" stroke-width="2.5"/><g transform="translate(669.4,171) rotate(-49.3)"><path d="M-18 0 Q-15 -11 0 -11 Q14 -10 17 0 Q14 10 0 11 Q-15 11 -18 0Z" fill="#058a05"/><rect x="8" y="-8" width="2" height="2" fill="#000"/><rect x="15" y="-2" width="2" height="2" fill="#000"/><rect x="8" y="8" width="2" height="2" fill="#000"/><rect x="15" y="-1" width="2" height="2" fill="#000"/><rect x="11" y="-6" width="2" height="2" fill="#000"/><rect x="14" y="4" width="2" height="2" fill="#000"/><rect x="13" y="-5" width="2" height="2" fill="#000"/><rect x="-0" y="-4" width="1.5" height="1.5" fill="#e0e0e0"/><rect x="3" y="-7" width="1.5" height="1.5" fill="#e0e0e0"/><rect x="-6" y="7" width="1.5" height="1.5" fill="#e0e0e0"/></g>
<path d="M691.2 169.4 L701.5 159.3" stroke="#7a6a18" stroke-width="2.5"/><g transform="translate(681,179.5) rotate(-44.6)"><path d="M-18 0 Q-15 -11 0 -11 Q14 -10 17 0 Q14 10 0 11 Q-15 11 -18 0Z" fill="#058a05"/><rect x="10" y="-7" width="2" height="2" fill="#000"/><rect x="15" y="2" width="2" height="2" fill="#000"/><rect x="14" y="3" width="2" height="2" fill="#000"/><rect x="12" y="-5" width="2" height="2" fill="#000"/><rect x="9" y="-8" width="2" height="2" fill="#000"/><rect x="11" y="7" width="2" height="2" fill="#000"/><rect x="14" y="3" width="2" height="2" fill="#000"/><rect x="-8" y="1" width="1.5" height="1.5" fill="#e0e0e0"/><rect x="2" y="3" width="1.5" height="1.5" fill="#e0e0e0"/><rect x="4" y="7" width="1.5" height="1.5" fill="#e0e0e0"/></g>
<path d="M704.9 184.5 L715.0 176.0" stroke="#7a6a18" stroke-width="2.5"/><g transform="translate(694.7,193) rotate(-39.9)"><path d="M-18 0 Q-15 -11 0 -11 Q14 -10 17 0 Q14 10 0 11 Q-15 11 -18 0Z" fill="#058a05"/><rect x="15" y="-2" width="2" height="2" fill="#000"/><rect x="15" y="1" width="2" height="2" fill="#000"/><rect x="10" y="-7" width="2" height="2" fill="#000"/><rect x="11" y="6" width="2" height="2" fill="#000"/><rect x="10" y="-7" width="2" height="2" fill="#000"/><rect x="12" y="6" width="2" height="2" fill="#000"/><rect x="14" y="-3" width="2" height="2" fill="#000"/><rect x="1" y="4" width="1.5" height="1.5" fill="#e0e0e0"/><rect x="-11" y="7" width="1.5" height="1.5" fill="#e0e0e0"/><rect x="-11" y="6" width="1.5" height="1.5" fill="#e0e0e0"/></g>
<path d="M312.8 587.5 L306.5 600.0" stroke="#7a6a18" stroke-width="2.5"/><g transform="translate(319,575) rotate(116.6)"><path d="M-18 0 Q-15 -11 0 -11 Q14 -10 17 0 Q14 10 0 11 Q-15 11 -18 0Z" fill="#058a05"/><rect x="14" y="4" width="2" height="2" fill="#000"/><rect x="13" y="-5" width="2" height="2" fill="#000"/><rect x="13" y="5" width="2" height="2" fill="#000"/><rect x="15" y="1" width="2" height="2" fill="#000"/><rect x="15" y="-2" width="2" height="2" fill="#000"/><rect x="3" y="-9" width="2" height="2" fill="#000"/><rect x="14" y="-3" width="2" height="2" fill="#000"/><rect x="1" y="-5" width="1.5" height="1.5" fill="#e0e0e0"/><rect x="-5" y="-5" width="1.5" height="1.5" fill="#e0e0e0"/><rect x="3" y="4" width="1.5" height="1.5" fill="#e0e0e0"/></g>
<g transform="translate(654.0,152.5) rotate(-139.5)"><path d="M-2.5 0 L2.5 0 L2.5 28.9 L-2.5 28.9Z" fill="#b06e18"/><path d="M-2.5 6.0 L-1 6.0 L-1 28.9 L-2.5 28.9Z" fill="#7a4a10"/><path d="M2 27.9 L5 29.9" stroke="#7a4a10" stroke-width="1.5"/><path d="M15.9 0.0 L16.2 1.8 L17.6 3.9 L16.4 5.7 L15.2 7.4 L12.8 8.5 L10.7 9.4 L8.6 10.2 L7.4 12.3 L5.2 13.5 L2.7 14.2 L0.0 12.6 L-2.4 12.7 L-4.5 11.6 L-7.4 12.3 L-9.9 11.7 L-12.4 10.9 L-13.0 8.5 L-13.6 6.7 L-14.2 4.9 L-16.6 3.7 L-17.9 2.0 L-18.1 0.0 L-17.3 -2.2 L-15.5 -3.9 L-14.3 -5.6 L-14.1 -7.8 L-13.4 -10.0 L-12.3 -12.3 L-9.5 -12.8 L-7.3 -13.8 L-4.8 -14.0 L-2.4 -14.3 L-0.0 -15.4 L2.7 -16.2 L5.0 -14.8 L7.2 -13.7 L8.5 -11.5 L10.9 -10.9 L13.0 -9.7 L14.9 -8.3 L16.8 -6.6 L17.4 -4.4 L16.5 -2.1Z" fill="#06a206"/><path d="M7.0 0.0 L7.7 0.7 L7.6 1.5 L7.3 2.3 L6.6 2.9 L5.8 3.4 L4.8 3.8 L4.1 4.3 L3.4 5.0 L2.3 5.2 L1.2 5.7 L0.0 5.1 L-1.1 5.0 L-2.1 4.7 L-3.2 4.8 L-4.5 4.8 L-5.3 4.2 L-5.8 3.4 L-6.5 2.8 L-6.4 2.0 L-7.2 1.4 L-7.8 0.8 L-8.3 0.0 L-7.9 -0.9 L-7.2 -1.6 L-6.9 -2.4 L-6.3 -3.1 L-6.0 -4.0 L-5.6 -4.9 L-4.5 -5.4 L-3.1 -5.3 L-2.1 -5.5 L-1.1 -5.7 L-0.0 -5.9 L1.2 -6.3 L2.4 -6.2 L3.2 -5.4 L4.0 -4.8 L4.8 -4.3 L5.8 -3.8 L7.0 -3.5 L7.4 -2.6 L7.8 -1.8 L7.6 -0.8Z" transform="translate(-4.2,-3.6)" fill="#12b212" opacity="0.4"/><rect x="-15" y="3" width="2" height="2" fill="#000"/><rect x="0" y="11" width="2" height="2" fill="#000"/><rect x="-3" y="11" width="2" height="2" fill="#000"/><rect x="-8" y="9" width="2" height="2" fill="#000"/><rect x="-11" y="7" width="2" height="2" fill="#000"/><rect x="15" y="3" width="2" height="2" fill="#000"/><rect x="-12" y="7" width="2" height="2" fill="#000"/></g>
<g transform="translate(226,245) rotate(-246.5) scale(1.0)"><path d="M-24 12 L22 14 L21 19 L-23 17 Z" fill="#78c828"/><path d="M-22 -7 L21 -3 L21 14 L-22 12Z" fill="#f8d088"/><rect x="-19" y="2" width="5" height="4" fill="#303030"/><rect x="-12" y="3" width="5" height="4" fill="#808080"/><rect x="-4" y="5" width="5" height="4" fill="#a09890"/><rect x="-18" y="7" width="6" height="3" fill="#fff8c0"/><rect x="8" y="5" width="6" height="5" fill="#909090"/><rect x="15" y="9" width="4" height="4" fill="#000"/><path d="M-22 -14 L22 -9 L22 3 L-22 -1Z" fill="#f01010"/><path d="M-22 -16 L-6 -14 L-6 -12 L-22 -13Z" fill="#9a6020"/><path d="M-6 -10 L3 -21 L13 -10 L13 0 L-6 -2 Z" fill="#e81818"/><path d="M-3 -9 L3 -17 L10 -9 L10 -2 L-3 -3Z" fill="#f8d088"/><rect x="0" y="-10" width="6" height="6" fill="#a8a098"/><rect x="19" y="2" width="3" height="10" fill="#8a5a20"/></g>
<g transform="translate(207,375) rotate(85.4) scale(1.0)"><path d="M-24 12 L22 14 L21 19 L-23 17 Z" fill="#78c828"/><path d="M-22 -7 L21 -3 L21 14 L-22 12Z" fill="#f8d088"/><rect x="-19" y="2" width="5" height="4" fill="#303030"/><rect x="-12" y="3" width="5" height="4" fill="#808080"/><rect x="-4" y="5" width="5" height="4" fill="#a09890"/><rect x="-18" y="7" width="6" height="3" fill="#fff8c0"/><rect x="8" y="5" width="6" height="5" fill="#909090"/><rect x="15" y="9" width="4" height="4" fill="#000"/><path d="M-22 -14 L22 -9 L22 3 L-22 -1Z" fill="#f01010"/><path d="M-22 -16 L-6 -14 L-6 -12 L-22 -13Z" fill="#9a6020"/><path d="M-6 -10 L3 -21 L13 -10 L13 0 L-6 -2 Z" fill="#e81818"/><path d="M-3 -9 L3 -17 L10 -9 L10 -2 L-3 -3Z" fill="#f8d088"/><rect x="0" y="-10" width="6" height="6" fill="#a8a098"/><rect x="19" y="2" width="3" height="10" fill="#8a5a20"/></g>
<g transform="translate(725,240) rotate(-114.5) scale(0.95)"><path d="M-24 12 L22 14 L21 19 L-23 17 Z" fill="#78c828"/><path d="M-22 -7 L21 -3 L21 14 L-22 12Z" fill="#f8d088"/><rect x="-19" y="2" width="5" height="4" fill="#303030"/><rect x="-12" y="3" width="5" height="4" fill="#808080"/><rect x="-4" y="5" width="5" height="4" fill="#a09890"/><rect x="-18" y="7" width="6" height="3" fill="#fff8c0"/><rect x="8" y="5" width="6" height="5" fill="#909090"/><rect x="15" y="9" width="4" height="4" fill="#000"/><path d="M-22 -14 L22 -9 L22 3 L-22 -1Z" fill="#f01010"/><path d="M-22 -16 L-6 -14 L-6 -12 L-22 -13Z" fill="#9a6020"/><path d="M-6 -10 L3 -21 L13 -10 L13 0 L-6 -2 Z" fill="#e81818"/><path d="M-3 -9 L3 -17 L10 -9 L10 -2 L-3 -3Z" fill="#f8d088"/><rect x="0" y="-10" width="6" height="6" fill="#a8a098"/><rect x="19" y="2" width="3" height="10" fill="#8a5a20"/></g>
<g transform="translate(349,593.5) rotate(27.8) scale(0.8)"><path d="M-24 12 L22 14 L21 19 L-23 17 Z" fill="#78c828"/><path d="M-22 -7 L21 -3 L21 14 L-22 12Z" fill="#f8d088"/><rect x="-19" y="2" width="5" height="4" fill="#303030"/><rect x="-12" y="3" width="5" height="4" fill="#808080"/><rect x="-4" y="5" width="5" height="4" fill="#a09890"/><rect x="-18" y="7" width="6" height="3" fill="#fff8c0"/><rect x="8" y="5" width="6" height="5" fill="#909090"/><rect x="15" y="9" width="4" height="4" fill="#000"/><path d="M-22 -14 L22 -9 L22 3 L-22 -1Z" fill="#f01010"/><path d="M-22 -16 L-6 -14 L-6 -12 L-22 -13Z" fill="#9a6020"/><path d="M-6 -10 L3 -21 L13 -10 L13 0 L-6 -2 Z" fill="#e81818"/><path d="M-3 -9 L3 -17 L10 -9 L10 -2 L-3 -3Z" fill="#f8d088"/><rect x="0" y="-10" width="6" height="6" fill="#a8a098"/><rect x="19" y="2" width="3" height="10" fill="#8a5a20"/></g>
<g transform="translate(260,499) rotate(56.0)"><rect x="-17" y="-6" width="34" height="12" fill="#e6dcd8"/><rect x="-10" y="-5" width="2" height="2" fill="#909090"/><rect x="7" y="-2" width="2" height="2" fill="#fff"/><rect x="-17" y="-1" width="2" height="2" fill="#c8b8b0"/><rect x="-6" y="-1" width="2" height="2" fill="#b0b0b0"/><rect x="-1" y="4" width="2" height="2" fill="#fff"/><rect x="-10" y="3" width="2" height="2" fill="#fff"/><rect x="-16" y="4" width="2" height="2" fill="#fff"/><rect x="-5" y="0" width="2" height="2" fill="#fff"/><rect x="-8" y="3" width="2" height="2" fill="#8a7a70"/><rect x="-17" y="3" width="2" height="2" fill="#8a7a70"/><rect x="0" y="1" width="2" height="2" fill="#d0d0d0"/><rect x="-16" y="-3" width="2" height="2" fill="#fff"/><rect x="2" y="3" width="2" height="2" fill="#909090"/><rect x="-16" y="-3" width="2" height="2" fill="#707070"/><rect x="2" y="1" width="2" height="2" fill="#d0d0d0"/><rect x="-16" y="-6" width="2" height="2" fill="#5a8a8a"/><rect x="15" y="0" width="2" height="2" fill="#8a7a70"/><rect x="-16" y="-3" width="2" height="2" fill="#fff"/><rect x="-13" y="4" width="2" height="2" fill="#8a7a70"/><rect x="-1" y="0" width="2" height="2" fill="#707070"/><rect x="-13" y="-3" width="2" height="2" fill="#707070"/><rect x="12" y="-5" width="2" height="2" fill="#5a8a8a"/><rect x="-7" y="0" width="2" height="2" fill="#8a7a70"/><rect x="5" y="1" width="2" height="2" fill="#fff"/><rect x="6" y="2" width="2" height="2" fill="#fff"/><rect x="-4" y="-2" width="2" height="2" fill="#909090"/><rect x="-8" y="-3" width="2" height="2" fill="#b0b0b0"/><rect x="-13" y="2" width="2" height="2" fill="#5a8a8a"/><rect x="-17" y="-4" width="2" height="2" fill="#707070"/><rect x="-5" y="3" width="2" height="2" fill="#8a7a70"/><rect x="15" y="2" width="2" height="2" fill="#fff"/><rect x="11" y="-6" width="2" height="2" fill="#b0b0b0"/><rect x="-9" y="-4" width="2" height="2" fill="#d0d0d0"/><rect x="1" y="0" width="2" height="2" fill="#5a8a8a"/><rect x="-3" y="-5" width="2" height="2" fill="#5a8a8a"/><rect x="4" y="-5" width="2" height="2" fill="#fff"/><rect x="9" y="-4" width="2" height="2" fill="#8a7a70"/><rect x="15" y="-3" width="2" height="2" fill="#fff"/><rect x="-11" y="0" width="2" height="2" fill="#5a8a8a"/><rect x="-14" y="1" width="2" height="2" fill="#fff"/><rect x="7" y="-4" width="2" height="2" fill="#707070"/><rect x="-8" y="4" width="2" height="2" fill="#fff"/><rect x="-2" y="0" width="2" height="2" fill="#b0b0b0"/><rect x="2" y="3" width="2" height="2" fill="#b0b0b0"/><rect x="6" y="-3" width="2" height="2" fill="#707070"/><rect x="-17" y="3" width="4" height="3" fill="#a0d040"/></g>
<g transform="translate(722,436) rotate(-71.5)"><rect x="-17" y="-6" width="34" height="12" fill="#e6dcd8"/><rect x="-3" y="3" width="2" height="2" fill="#909090"/><rect x="15" y="2" width="2" height="2" fill="#c8b8b0"/><rect x="-9" y="3" width="2" height="2" fill="#d0d0d0"/><rect x="-8" y="-5" width="2" height="2" fill="#fff"/><rect x="9" y="-1" width="2" height="2" fill="#fff"/><rect x="-9" y="2" width="2" height="2" fill="#5a8a8a"/><rect x="5" y="-1" width="2" height="2" fill="#707070"/><rect x="-8" y="-2" width="2" height="2" fill="#b0b0b0"/><rect x="0" y="4" width="2" height="2" fill="#707070"/><rect x="15" y="2" width="2" height="2" fill="#fff"/><rect x="15" y="-5" width="2" height="2" fill="#d0d0d0"/><rect x="-6" y="3" width="2" height="2" fill="#c8b8b0"/><rect x="-11" y="1" width="2" height="2" fill="#fff"/><rect x="-2" y="2" width="2" height="2" fill="#d0d0d0"/><rect x="10" y="3" width="2" height="2" fill="#d0d0d0"/><rect x="8" y="-3" width="2" height="2" fill="#909090"/><rect x="-3" y="2" width="2" height="2" fill="#fff"/><rect x="-7" y="4" width="2" height="2" fill="#909090"/><rect x="-12" y="4" width="2" height="2" fill="#909090"/><rect x="-7" y="-4" width="2" height="2" fill="#707070"/><rect x="1" y="3" width="2" height="2" fill="#b0b0b0"/><rect x="0" y="-3" width="2" height="2" fill="#c8b8b0"/><rect x="9" y="-2" width="2" height="2" fill="#707070"/><rect x="0" y="1" width="2" height="2" fill="#909090"/><rect x="13" y="1" width="2" height="2" fill="#909090"/><rect x="-10" y="0" width="2" height="2" fill="#8a7a70"/><rect x="-11" y="-3" width="2" height="2" fill="#5a8a8a"/><rect x="-6" y="4" width="2" height="2" fill="#8a7a70"/><rect x="11" y="-3" width="2" height="2" fill="#fff"/><rect x="-15" y="3" width="2" height="2" fill="#d0d0d0"/><rect x="6" y="-4" width="2" height="2" fill="#707070"/><rect x="-16" y="-1" width="2" height="2" fill="#707070"/><rect x="-1" y="-1" width="2" height="2" fill="#707070"/><rect x="-15" y="-2" width="2" height="2" fill="#909090"/><rect x="-1" y="-1" width="2" height="2" fill="#b0b0b0"/><rect x="-12" y="1" width="2" height="2" fill="#5a8a8a"/><rect x="-13" y="2" width="2" height="2" fill="#707070"/><rect x="-2" y="-5" width="2" height="2" fill="#d0d0d0"/><rect x="-13" y="-2" width="2" height="2" fill="#5a8a8a"/><rect x="13" y="3" width="2" height="2" fill="#8a7a70"/><rect x="-15" y="-2" width="2" height="2" fill="#707070"/><rect x="-3" y="-3" width="2" height="2" fill="#909090"/><rect x="-15" y="0" width="2" height="2" fill="#909090"/><rect x="-2" y="4" width="2" height="2" fill="#707070"/><rect x="-6" y="-5" width="2" height="2" fill="#5a8a8a"/><rect x="-17" y="3" width="4" height="3" fill="#a0d040"/></g>
<g transform="translate(674,521) rotate(-49.8)"><rect x="-17" y="-6" width="34" height="12" fill="#e6dcd8"/><rect x="8" y="-1" width="2" height="2" fill="#5a8a8a"/><rect x="4" y="-2" width="2" height="2" fill="#d0d0d0"/><rect x="-14" y="-3" width="2" height="2" fill="#c8b8b0"/><rect x="-6" y="0" width="2" height="2" fill="#909090"/><rect x="-1" y="-6" width="2" height="2" fill="#c8b8b0"/><rect x="2" y="-4" width="2" height="2" fill="#d0d0d0"/><rect x="-12" y="4" width="2" height="2" fill="#8a7a70"/><rect x="-8" y="3" width="2" height="2" fill="#d0d0d0"/><rect x="-4" y="0" width="2" height="2" fill="#b0b0b0"/><rect x="2" y="-1" width="2" height="2" fill="#b0b0b0"/><rect x="-3" y="1" width="2" height="2" fill="#909090"/><rect x="-14" y="-6" width="2" height="2" fill="#c8b8b0"/><rect x="-3" y="4" width="2" height="2" fill="#b0b0b0"/><rect x="14" y="-4" width="2" height="2" fill="#707070"/><rect x="8" y="-4" width="2" height="2" fill="#fff"/><rect x="-2" y="-6" width="2" height="2" fill="#8a7a70"/><rect x="6" y="0" width="2" height="2" fill="#c8b8b0"/><rect x="10" y="-1" width="2" height="2" fill="#5a8a8a"/><rect x="-4" y="3" width="2" height="2" fill="#fff"/><rect x="-5" y="4" width="2" height="2" fill="#707070"/><rect x="11" y="2" width="2" height="2" fill="#8a7a70"/><rect x="0" y="-5" width="2" height="2" fill="#5a8a8a"/><rect x="10" y="-4" width="2" height="2" fill="#d0d0d0"/><rect x="6" y="0" width="2" height="2" fill="#fff"/><rect x="5" y="-2" width="2" height="2" fill="#5a8a8a"/><rect x="5" y="-4" width="2" height="2" fill="#909090"/><rect x="-14" y="2" width="2" height="2" fill="#c8b8b0"/><rect x="-1" y="0" width="2" height="2" fill="#fff"/><rect x="-7" y="-5" width="2" height="2" fill="#b0b0b0"/><rect x="-12" y="4" width="2" height="2" fill="#707070"/><rect x="-15" y="4" width="2" height="2" fill="#909090"/><rect x="1" y="3" width="2" height="2" fill="#8a7a70"/><rect x="1" y="1" width="2" height="2" fill="#b0b0b0"/><rect x="-17" y="-4" width="2" height="2" fill="#909090"/><rect x="2" y="-1" width="2" height="2" fill="#fff"/><rect x="-9" y="1" width="2" height="2" fill="#c8b8b0"/><rect x="6" y="-1" width="2" height="2" fill="#b0b0b0"/><rect x="1" y="-6" width="2" height="2" fill="#c8b8b0"/><rect x="-13" y="4" width="2" height="2" fill="#fff"/><rect x="14" y="-4" width="2" height="2" fill="#909090"/><rect x="1" y="4" width="2" height="2" fill="#fff"/><rect x="5" y="-2" width="2" height="2" fill="#d0d0d0"/><rect x="-13" y="3" width="2" height="2" fill="#5a8a8a"/><rect x="-2" y="4" width="2" height="2" fill="#8a7a70"/><rect x="-6" y="3" width="2" height="2" fill="#909090"/><rect x="-17" y="3" width="4" height="3" fill="#a0d040"/></g>
<g transform="translate(609,574) rotate(-31.2)"><rect x="-17" y="-6" width="34" height="12" fill="#e6dcd8"/><rect x="-7" y="-5" width="2" height="2" fill="#b0b0b0"/><rect x="0" y="0" width="2" height="2" fill="#5a8a8a"/><rect x="13" y="1" width="2" height="2" fill="#d0d0d0"/><rect x="-11" y="-2" width="2" height="2" fill="#b0b0b0"/><rect x="-6" y="3" width="2" height="2" fill="#b0b0b0"/><rect x="-15" y="0" width="2" height="2" fill="#b0b0b0"/><rect x="-17" y="-6" width="2" height="2" fill="#fff"/><rect x="5" y="-6" width="2" height="2" fill="#707070"/><rect x="-9" y="-4" width="2" height="2" fill="#d0d0d0"/><rect x="8" y="-1" width="2" height="2" fill="#d0d0d0"/><rect x="6" y="-4" width="2" height="2" fill="#fff"/><rect x="1" y="3" width="2" height="2" fill="#909090"/><rect x="-8" y="-1" width="2" height="2" fill="#8a7a70"/><rect x="-11" y="-4" width="2" height="2" fill="#fff"/><rect x="9" y="0" width="2" height="2" fill="#8a7a70"/><rect x="-12" y="-6" width="2" height="2" fill="#909090"/><rect x="1" y="-5" width="2" height="2" fill="#5a8a8a"/><rect x="-7" y="-3" width="2" height="2" fill="#c8b8b0"/><rect x="2" y="-2" width="2" height="2" fill="#d0d0d0"/><rect x="-8" y="0" width="2" height="2" fill="#c8b8b0"/><rect x="2" y="1" width="2" height="2" fill="#fff"/><rect x="-3" y="-4" width="2" height="2" fill="#c8b8b0"/><rect x="14" y="0" width="2" height="2" fill="#909090"/><rect x="4" y="2" width="2" height="2" fill="#8a7a70"/><rect x="11" y="0" width="2" height="2" fill="#fff"/><rect x="-5" y="-1" width="2" height="2" fill="#c8b8b0"/><rect x="8" y="-5" width="2" height="2" fill="#5a8a8a"/><rect x="0" y="-1" width="2" height="2" fill="#fff"/><rect x="4" y="4" width="2" height="2" fill="#fff"/><rect x="-13" y="-3" width="2" height="2" fill="#fff"/><rect x="1" y="0" width="2" height="2" fill="#909090"/><rect x="5" y="-3" width="2" height="2" fill="#8a7a70"/><rect x="3" y="4" width="2" height="2" fill="#fff"/><rect x="9" y="0" width="2" height="2" fill="#fff"/><rect x="6" y="-4" width="2" height="2" fill="#707070"/><rect x="6" y="-1" width="2" height="2" fill="#909090"/><rect x="9" y="0" width="2" height="2" fill="#707070"/><rect x="5" y="3" width="2" height="2" fill="#909090"/><rect x="-1" y="-3" width="2" height="2" fill="#c8b8b0"/><rect x="13" y="2" width="2" height="2" fill="#fff"/><rect x="-4" y="-5" width="2" height="2" fill="#8a7a70"/><rect x="-10" y="3" width="2" height="2" fill="#fff"/><rect x="0" y="-3" width="2" height="2" fill="#8a7a70"/><rect x="-12" y="-2" width="2" height="2" fill="#5a8a8a"/><rect x="2" y="3" width="2" height="2" fill="#fff"/><rect x="-17" y="3" width="4" height="3" fill="#a0d040"/></g>
<g transform="translate(560,598.5) rotate(-19.0)"><rect x="-17" y="-6" width="34" height="12" fill="#e6dcd8"/><rect x="10" y="-4" width="2" height="2" fill="#b0b0b0"/><rect x="5" y="-4" width="2" height="2" fill="#707070"/><rect x="-16" y="2" width="2" height="2" fill="#909090"/><rect x="-5" y="-1" width="2" height="2" fill="#707070"/><rect x="0" y="4" width="2" height="2" fill="#fff"/><rect x="-5" y="-6" width="2" height="2" fill="#5a8a8a"/><rect x="-17" y="2" width="2" height="2" fill="#c8b8b0"/><rect x="14" y="2" width="2" height="2" fill="#8a7a70"/><rect x="-10" y="-3" width="2" height="2" fill="#909090"/><rect x="9" y="-6" width="2" height="2" fill="#c8b8b0"/><rect x="13" y="2" width="2" height="2" fill="#707070"/><rect x="-14" y="-3" width="2" height="2" fill="#d0d0d0"/><rect x="14" y="-2" width="2" height="2" fill="#d0d0d0"/><rect x="-5" y="1" width="2" height="2" fill="#fff"/><rect x="-8" y="2" width="2" height="2" fill="#707070"/><rect x="-7" y="-1" width="2" height="2" fill="#c8b8b0"/><rect x="-11" y="1" width="2" height="2" fill="#b0b0b0"/><rect x="-7" y="0" width="2" height="2" fill="#d0d0d0"/><rect x="-13" y="-5" width="2" height="2" fill="#707070"/><rect x="-17" y="3" width="2" height="2" fill="#707070"/><rect x="4" y="-2" width="2" height="2" fill="#b0b0b0"/><rect x="7" y="-4" width="2" height="2" fill="#909090"/><rect x="14" y="-4" width="2" height="2" fill="#b0b0b0"/><rect x="9" y="3" width="2" height="2" fill="#c8b8b0"/><rect x="11" y="4" width="2" height="2" fill="#b0b0b0"/><rect x="9" y="4" width="2" height="2" fill="#fff"/><rect x="1" y="-1" width="2" height="2" fill="#8a7a70"/><rect x="-17" y="1" width="2" height="2" fill="#fff"/><rect x="12" y="-6" width="2" height="2" fill="#707070"/><rect x="15" y="3" width="2" height="2" fill="#b0b0b0"/><rect x="11" y="1" width="2" height="2" fill="#c8b8b0"/><rect x="-8" y="4" width="2" height="2" fill="#fff"/><rect x="8" y="3" width="2" height="2" fill="#5a8a8a"/><rect x="-3" y="1" width="2" height="2" fill="#fff"/><rect x="8" y="-2" width="2" height="2" fill="#707070"/><rect x="-2" y="3" width="2" height="2" fill="#8a7a70"/><rect x="13" y="0" width="2" height="2" fill="#b0b0b0"/><rect x="-6" y="-4" width="2" height="2" fill="#fff"/><rect x="3" y="0" width="2" height="2" fill="#909090"/><rect x="-7" y="4" width="2" height="2" fill="#909090"/><rect x="-3" y="-3" width="2" height="2" fill="#c8b8b0"/><rect x="-8" y="-5" width="2" height="2" fill="#5a8a8a"/><rect x="-9" y="1" width="2" height="2" fill="#d0d0d0"/><rect x="12" y="1" width="2" height="2" fill="#5a8a8a"/><rect x="2" y="1" width="2" height="2" fill="#b0b0b0"/><rect x="-17" y="3" width="4" height="3" fill="#a0d040"/></g>
<g fill="#000"><ellipse cx="403" cy="343.5" rx="3" ry="3"/><rect x="401" y="345" width="4" height="4"/><ellipse cx="403" cy="356" rx="8" ry="8.2"/></g><g stroke="#000" stroke-width="3.2" stroke-linecap="round"><path d="M394 349 L399 352"/><path d="M412 349 L407 352"/><path d="M395 363.5 L399 360"/><path d="M411 363.5 L407 360"/></g>
</svg></div>
<div class="b3" style="left:15px;top:91px;width:121px;height:52px"></div>
<div style="left:15px;top:108px;width:121px;text-align:center;font-size:16px;color:#111;line-height:20px">計測</div>
<div class="tbox" style="left:16px;top:151px;width:120px;height:53px"></div>
<div class="zero" style="left:24px;top:162px">0</div>
<div class="b3" style="left:63px;top:207px;width:26px;height:22px"></div>
<div class="lbl" style="left:63px;top:207px;width:26px">雲</div>
<div class="tbox" style="left:16px;top:234px;width:120px;height:53px"></div>
<div class="zero" style="left:24px;top:245px">0</div>
<div class="b3" style="left:63px;top:290px;width:26px;height:22px"></div>
<div class="lbl" style="left:63px;top:290px;width:26px">空</div>
<div class="tbox" style="left:37px;top:319px;width:74px;height:52px"></div>
<div class="zero" style="left:45px;top:330px">0</div>
<div class="b3" style="left:45px;top:374px;width:58px;height:22px"></div>
<div class="lbl" style="left:45px;top:374px;width:58px">雲の量</div>
<div class="b3" style="left:14px;top:587px;width:122px;height:53px"></div>
<div style="left:14px;top:603px;width:122px;text-align:center;font-size:16px;color:#111;line-height:20px">えをけす</div>
<svg style="position:absolute;left:7px;top:651px" width="10" height="10"><path d="M6.5 1.5 L3 5 L6.5 8.5" fill="none" stroke="#505050" stroke-width="2.2"/></svg>
<div style="left:20px;top:649px;width:17px;height:15px;background:#cdcdcd"></div>
<svg style="position:absolute;left:745px;top:651px" width="10" height="10"><path d="M3.5 1.5 L7 5 L3.5 8.5" fill="none" stroke="#505050" stroke-width="2.2"/></svg>
<div style="left:3px;top:672px;width:755px;height:1px;background:#fff"></div>
<div style="left:4px;top:677px;width:754px;height:58px;border:1px solid;border-color:#a0a0a0 #808080 #696969 #f0f0f0;background:#f0f0f0"></div>
<div style="left:6px;top:680px;width:749px;height:53px;border:1px solid;border-color:#696969 #fff #fff #696969;background:#f0f0f0"></div>
<div style="left:8px;top:682px;font-size:15px;color:#000;line-height:18px;white-space:nowrap">はいけいのこてい</div>
<div style="left:21px;top:738px;width:987px;height:2px;background:#a0a0a0"></div>
<div style="left:765px;top:52px;width:1px;height:688px;background:#808080"></div>
<div style="left:766px;top:52px;width:1px;height:686px;background:#fff"></div>
<div style="left:758px;top:56px;width:2px;height:615px;background:#fafafa"></div>
<div style="left:768px;top:54px;width:239px;height:609px;border:1px solid;border-color:#a0a0a0 #fff #fff #a0a0a0"><div style="left:0;top:0;width:237px;height:607px;border:1px solid;border-color:#696969 #e3e3e3 #e3e3e3 #696969"></div></div>
<div class="tool" style="left:770px;top:60px"><svg width="23" height="18" viewBox="0 0 23 18"><path d="M5 12 L18 4 L21.5 9.5 L8.5 17 Z" fill="#fff" stroke="#000" stroke-width="1.3"/><path d="M18 4 L20 2.8 L23 8.2 L21.5 9.5Z" fill="#e0e020" stroke="#000" stroke-width="1.2"/><path d="M5 12 L8.5 17 L2 18Z" fill="#fff" stroke="#000" stroke-width="1.2"/><path d="M2 18 L4 15.5 L5 17.5Z" fill="#000"/></svg><div class="tl"><span style="transform:translateX(-50%) scaleX(1.0)">ペン</span></div></div>
<div class="tool" style="left:805px;top:60px"><svg width="23" height="18" viewBox="0 0 23 18"><path d="M2.5 16 L20.5 5" stroke="#000" stroke-width="3.2"/></svg><div class="tl"><span style="transform:translateX(-50%) scaleX(1.0)">直線</span></div></div>
<div class="tool" style="left:840px;top:60px"><svg width="23" height="18" viewBox="0 0 23 18"><circle cx="10.5" cy="10" r="7.5" fill="none" stroke="#000090" stroke-width="1.4"/></svg><div class="tl"><span style="transform:translateX(-50%) scaleX(1.0)">円</span></div></div>
<div class="tool" style="left:875px;top:60px"><svg width="23" height="18" viewBox="0 0 23 18"><circle cx="11.5" cy="9" r="8" fill="#000080"/></svg><div class="tl"><span style="transform:translateX(-50%) scaleX(0.62)">ぬりつぶし</span></div></div>
<div class="tool" style="left:910px;top:60px"><svg width="23" height="18" viewBox="0 0 23 18"><rect x="4" y="2" width="15" height="14" fill="none" stroke="#000090" stroke-width="1.2"/></svg><div class="tl"><span style="transform:translateX(-50%) scaleX(1.0)">四角</span></div></div>
<div class="tool" style="left:945px;top:60px"><svg width="23" height="18" viewBox="0 0 23 18"><rect x="4" y="2" width="15" height="15" fill="#000080"/></svg><div class="tl"><span style="transform:translateX(-50%) scaleX(0.62)">ぬりつぶし</span></div></div>
<div class="tool" style="left:770px;top:99px"><svg width="23" height="18" viewBox="0 0 23 18"><path d="M4 7 Q3 0 8 1 Q12 2 10 6" fill="none" stroke="#000" stroke-width="1.2"/><path d="M0.5 11 L8.5 4 L16 11.5 L8 18.5Z" fill="#888" stroke="#000" stroke-width="1.3"/><path d="M14 7 Q20 6 23 14 L20 17 Q18 12 15.5 11.5Z" fill="#109068"/><circle cx="8" cy="9" r="1.2" fill="#000"/></svg><div class="tl"><span style="transform:translateX(-50%) scaleX(0.62)">ぬりつぶし</span></div></div>
<div class="tool" style="left:805px;top:99px"><svg width="23" height="18" viewBox="0 0 23 18"><path d="M-2 8 Q-3 1 4 1 Q10 0 15 1.5 Q11 3 8 6 Q5 10 6 14 Q2 15 -1 12Z" fill="#f8f0a0"/><path d="M11 6 L15.5 2 L20 6 V18.5 H11Z" fill="#1020a0" stroke="#000" stroke-width="1"/><rect x="13" y="8.5" width="5" height="6" fill="#fff"/></svg><div class="tl"><span style="transform:translateX(-50%) scaleX(0.78)">スプレー</span></div></div>
<div class="tool" style="left:840px;top:99px"><svg width="23" height="18" viewBox="0 0 23 18"><rect x="-0.5" y="2.5" width="20" height="14" fill="none" stroke="#505050" stroke-width="1.3" stroke-dasharray="2 1.5"/><path d="M17 16.5 H22 M19.5 14 V19" stroke="#303030" stroke-width="1"/></svg><div class="tl"><span style="transform:translateX(-50%) scaleX(1.0)">選ぶ</span></div></div>
<div class="tool" style="left:875px;top:99px"><svg width="23" height="18" viewBox="0 0 23 18"><path d="M2 8 Q0 3 10 2.5 Q22 2 21 8 Q20 12 8 13 Q3 13 2 8Z" fill="none" stroke="#000" stroke-width="1"/><path d="M5 12 Q1 14 4 16 Q7 17 6 13" fill="none" stroke="#000" stroke-width="1"/></svg><div class="tl"><span style="transform:translateX(-50%) scaleX(1.0)">選ぶ</span></div></div>
<div class="tool" style="left:910px;top:99px"><svg width="23" height="18" viewBox="0 0 23 18"><path d="M0 19 L13 8 L16 11 L2 20Z" fill="#fff" stroke="#000" stroke-width="1"/><path d="M0 19 L6.5 13.5 L9 15.5 L2 20Z" fill="#e01010"/><path d="M12 7 L17 12" stroke="#000" stroke-width="2.5"/><circle cx="18" cy="5.5" r="3.8" fill="#000080"/></svg><div class="tl"><span style="transform:translateX(-50%) scaleX(0.78)">スポイト</span></div></div>
<div class="tool" style="left:945px;top:99px"><svg width="23" height="18" viewBox="0 0 23 18"><path d="M5 9 L15 2 L22 6 L12 13Z" fill="#30e0e8" stroke="#000"/><path d="M12 13 L22 6 L22 10 L13 17Z" fill="#209090" stroke="#000"/><path d="M5 9 Q1 12 5 16 L13 17 L12 13Z" fill="#fff" stroke="#000"/></svg><div class="tl"><span style="transform:translateX(-50%) scaleX(0.78)">消しゴム</span></div></div>
<div class="tool" style="left:770px;top:133px"><svg width="23" height="18" viewBox="0 0 23 18"><path d="M6 12 Q3 5 10 3 Q18 2 17 9 Q16 13 13 13" fill="none" stroke="#000090" stroke-width="3"/><path d="M1 9 L9 11 L4 16Z" fill="#000090"/></svg><div class="tl"><span style="transform:translateX(-50%) scaleX(1.0)">戻す</span></div></div>
<div style="left:770px;top:201px;width:235px;height:1px;background:#808080"></div>
<div style="left:771px;top:202px;width:234px;height:65px;background:#fff"></div>
<svg style="position:absolute;left:0;top:0" width="1008" height="740"><g><rect x="798" y="218" width="1" height="2" fill="#c0c0c0"/><rect x="814.5" y="203.5" width="31" height="31" fill="none" stroke="#000" stroke-dasharray="2 2"/><rect x="826" y="215" width="7" height="7" fill="#a0a0a0"/><circle cx="862" cy="219" r="7.5" fill="#a0a0a0"/><circle cx="894" cy="219" r="14.5" fill="#a0a0a0"/><rect x="919" y="212" width="15" height="15" fill="#a0a0a0"/><rect x="944" y="205" width="29" height="29" fill="#a0a0a0"/><defs><radialGradient id="sg"><stop offset="0" stop-color="#999"/><stop offset="0.6" stop-color="#aaa"/><stop offset="1" stop-color="#fff" stop-opacity="0"/></radialGradient></defs><circle cx="798.5" cy="251.5" r="5" fill="#a0a0a0"/><circle cx="830" cy="251.5" r="11.5" fill="url(#sg)"/><circle cx="862" cy="251.5" r="15" fill="url(#sg)"/><rect x="884" y="242" width="20" height="20" fill="#c8c8c8"/><rect x="889" y="247" width="10" height="10" fill="#a8a8a8"/><rect x="912" y="237" width="29" height="29" fill="#d0d0d0"/><rect x="917" y="242" width="19" height="19" fill="#b8b8b8"/><rect x="921" y="246" width="11" height="11" fill="#a8a8a8"/><circle cx="958.5" cy="251.5" r="7.5" fill="#a8a8a8" stroke="#000" stroke-width="1.2"/></g></svg>
<div style="left:988px;top:203px;width:16px;height:64px;background:#f0f0f0"></div>
<svg style="position:absolute;left:990px;top:206px" width="12" height="10"><path d="M2 7 L6 3 L10 7" fill="none" stroke="#505050" stroke-width="2.2"/></svg>
<div style="left:988px;top:220px;width:15px;height:17px;background:#cdcdcd"></div>
<svg style="position:absolute;left:990px;top:254px" width="12" height="10"><path d="M2 3 L6 7 L10 3" fill="none" stroke="#505050" stroke-width="2.2"/></svg>
<div style="left:771px;top:267px;width:234px;height:1px;background:#e3e3e3"></div>
<svg style="position:absolute;left:0;top:0" width="1008" height="740" shape-rendering="crispEdges"><rect x="783" y="284" width="15" height="15" fill="#ffffff"/><rect x="798" y="284" width="15" height="15" fill="#ffe8e8"/><rect x="813" y="284" width="15" height="15" fill="#fff0e8"/><rect x="828" y="284" width="15" height="15" fill="#f8f4f0"/><rect x="843" y="284" width="15" height="15" fill="#ffffe8"/><rect x="858" y="284" width="15" height="15" fill="#f0ffe8"/><rect x="873" y="284" width="15" height="15" fill="#e8ffe8"/><rect x="888" y="284" width="15" height="15" fill="#e8fff8"/><rect x="903" y="284" width="15" height="15" fill="#f0ffff"/><rect x="918" y="284" width="15" height="15" fill="#e8f4ff"/><rect x="933" y="284" width="15" height="15" fill="#ececff"/><rect x="948" y="284" width="15" height="15" fill="#f4e8ff"/><rect x="963" y="284" width="15" height="15" fill="#ffe8ff"/><rect x="978" y="284" width="15" height="15" fill="#ffe8f4"/><rect x="783" y="299" width="15" height="15" fill="#f0f0f0"/><rect x="798" y="299" width="15" height="15" fill="#ffc8c8"/><rect x="813" y="299" width="15" height="15" fill="#ffdcc8"/><rect x="828" y="299" width="15" height="15" fill="#f0e0d8"/><rect x="843" y="299" width="15" height="15" fill="#ffffc0"/><rect x="858" y="299" width="15" height="15" fill="#e0f8c8"/><rect x="873" y="299" width="15" height="15" fill="#c8ffc8"/><rect x="888" y="299" width="15" height="15" fill="#c8fff0"/><rect x="903" y="299" width="15" height="15" fill="#c8ffff"/><rect x="918" y="299" width="15" height="15" fill="#c8e4ff"/><rect x="933" y="299" width="15" height="15" fill="#c8c8ff"/><rect x="948" y="299" width="15" height="15" fill="#e8c8ff"/><rect x="963" y="299" width="15" height="15" fill="#ffc8ff"/><rect x="978" y="299" width="15" height="15" fill="#ffc8e4"/><rect x="783" y="314" width="15" height="15" fill="#e4e4e4"/><rect x="798" y="314" width="15" height="15" fill="#ff9898"/><rect x="813" y="314" width="15" height="15" fill="#ffc898"/><rect x="828" y="314" width="15" height="15" fill="#e8c8b8"/><rect x="843" y="314" width="15" height="15" fill="#ffff98"/><rect x="858" y="314" width="15" height="15" fill="#c8f098"/><rect x="873" y="314" width="15" height="15" fill="#98ff98"/><rect x="888" y="314" width="15" height="15" fill="#98ffe0"/><rect x="903" y="314" width="15" height="15" fill="#98ffff"/><rect x="918" y="314" width="15" height="15" fill="#98d0ff"/><rect x="933" y="314" width="15" height="15" fill="#9898ff"/><rect x="948" y="314" width="15" height="15" fill="#d898ff"/><rect x="963" y="314" width="15" height="15" fill="#ff98ff"/><rect x="978" y="314" width="15" height="15" fill="#ff98d0"/><rect x="783" y="329" width="15" height="15" fill="#d0d0d0"/><rect x="798" y="329" width="15" height="15" fill="#ff5858"/><rect x="813" y="329" width="15" height="15" fill="#ffa858"/><rect x="828" y="329" width="15" height="15" fill="#d8b8a0"/><rect x="843" y="329" width="15" height="15" fill="#ffff58"/><rect x="858" y="329" width="15" height="15" fill="#a8f058"/><rect x="873" y="329" width="15" height="15" fill="#58ff58"/><rect x="888" y="329" width="15" height="15" fill="#58ffd8"/><rect x="903" y="329" width="15" height="15" fill="#58ffff"/><rect x="918" y="329" width="15" height="15" fill="#58c0ff"/><rect x="933" y="329" width="15" height="15" fill="#5858ff"/><rect x="948" y="329" width="15" height="15" fill="#c058ff"/><rect x="963" y="329" width="15" height="15" fill="#ff58ff"/><rect x="978" y="329" width="15" height="15" fill="#ff58b8"/><rect x="783" y="344" width="15" height="15" fill="#c0c0c0"/><rect x="798" y="344" width="15" height="15" fill="#ff0000"/><rect x="813" y="344" width="15" height="15" fill="#ff8000"/><rect x="828" y="344" width="15" height="15" fill="#c8a080"/><rect x="843" y="344" width="15" height="15" fill="#ffff00"/><rect x="858" y="344" width="15" height="15" fill="#80e800"/><rect x="873" y="344" width="15" height="15" fill="#00f000"/><rect x="888" y="344" width="15" height="15" fill="#00ffd0"/><rect x="903" y="344" width="15" height="15" fill="#00ffff"/><rect x="918" y="344" width="15" height="15" fill="#00a0ff"/><rect x="933" y="344" width="15" height="15" fill="#0000ff"/><rect x="948" y="344" width="15" height="15" fill="#a000ff"/><rect x="963" y="344" width="15" height="15" fill="#ff00ff"/><rect x="978" y="344" width="15" height="15" fill="#ff00a0"/><rect x="783" y="359" width="15" height="15" fill="#a8a8a8"/><rect x="798" y="359" width="15" height="15" fill="#f00000"/><rect x="813" y="359" width="15" height="15" fill="#f87800"/><rect x="828" y="359" width="15" height="15" fill="#b89078"/><rect x="843" y="359" width="15" height="15" fill="#f8f000"/><rect x="858" y="359" width="15" height="15" fill="#78d800"/><rect x="873" y="359" width="15" height="15" fill="#00e800"/><rect x="888" y="359" width="15" height="15" fill="#00f0d0"/><rect x="903" y="359" width="15" height="15" fill="#00f0f0"/><rect x="918" y="359" width="15" height="15" fill="#00a0f0"/><rect x="933" y="359" width="15" height="15" fill="#0000f0"/><rect x="948" y="359" width="15" height="15" fill="#9800f0"/><rect x="963" y="359" width="15" height="15" fill="#f000f0"/><rect x="978" y="359" width="15" height="15" fill="#f00098"/><rect x="783" y="374" width="15" height="15" fill="#909090"/><rect x="798" y="374" width="15" height="15" fill="#e00000"/><rect x="813" y="374" width="15" height="15" fill="#e07000"/><rect x="828" y="374" width="15" height="15" fill="#a88068"/><rect x="843" y="374" width="15" height="15" fill="#e0e000"/><rect x="858" y="374" width="15" height="15" fill="#68c800"/><rect x="873" y="374" width="15" height="15" fill="#00d800"/><rect x="888" y="374" width="15" height="15" fill="#00d8c0"/><rect x="903" y="374" width="15" height="15" fill="#00d8d8"/><rect x="918" y="374" width="15" height="15" fill="#0090e0"/><rect x="933" y="374" width="15" height="15" fill="#0000e0"/><rect x="948" y="374" width="15" height="15" fill="#8800e0"/><rect x="963" y="374" width="15" height="15" fill="#e000e0"/><rect x="978" y="374" width="15" height="15" fill="#e00088"/><rect x="783" y="389" width="15" height="15" fill="#707070"/><rect x="798" y="389" width="15" height="15" fill="#c80000"/><rect x="813" y="389" width="15" height="15" fill="#c86000"/><rect x="828" y="389" width="15" height="15" fill="#987058"/><rect x="843" y="389" width="15" height="15" fill="#c8c800"/><rect x="858" y="389" width="15" height="15" fill="#58b000"/><rect x="873" y="389" width="15" height="15" fill="#00c000"/><rect x="888" y="389" width="15" height="15" fill="#00c0a8"/><rect x="903" y="389" width="15" height="15" fill="#00c0c0"/><rect x="918" y="389" width="15" height="15" fill="#0080c8"/><rect x="933" y="389" width="15" height="15" fill="#0000c8"/><rect x="948" y="389" width="15" height="15" fill="#7800c8"/><rect x="963" y="389" width="15" height="15" fill="#c800c8"/><rect x="978" y="389" width="15" height="15" fill="#c80078"/><rect x="783" y="404" width="15" height="15" fill="#404040"/><rect x="798" y="404" width="15" height="15" fill="#a00000"/><rect x="813" y="404" width="15" height="15" fill="#a05000"/><rect x="828" y="404" width="15" height="15" fill="#806050"/><rect x="843" y="404" width="15" height="15" fill="#a8a800"/><rect x="858" y="404" width="15" height="15" fill="#489000"/><rect x="873" y="404" width="15" height="15" fill="#00a000"/><rect x="888" y="404" width="15" height="15" fill="#00a088"/><rect x="903" y="404" width="15" height="15" fill="#00a0a0"/><rect x="918" y="404" width="15" height="15" fill="#0068a0"/><rect x="933" y="404" width="15" height="15" fill="#0000a0"/><rect x="948" y="404" width="15" height="15" fill="#6000a0"/><rect x="963" y="404" width="15" height="15" fill="#a000a0"/><rect x="978" y="404" width="15" height="15" fill="#a00060"/><rect x="783" y="419" width="15" height="15" fill="#000000"/><rect x="798" y="419" width="15" height="15" fill="#780000"/><rect x="813" y="419" width="15" height="15" fill="#783800"/><rect x="828" y="419" width="15" height="15" fill="#604838"/><rect x="843" y="419" width="15" height="15" fill="#787800"/><rect x="858" y="419" width="15" height="15" fill="#306800"/><rect x="873" y="419" width="15" height="15" fill="#007800"/><rect x="888" y="419" width="15" height="15" fill="#007860"/><rect x="903" y="419" width="15" height="15" fill="#007878"/><rect x="918" y="419" width="15" height="15" fill="#004878"/><rect x="933" y="419" width="15" height="15" fill="#000078"/><rect x="948" y="419" width="15" height="15" fill="#480078"/><rect x="963" y="419" width="15" height="15" fill="#780078"/><rect x="978" y="419" width="15" height="15" fill="#600050"/><rect x="783.5" y="358.5" width="209" height="16" fill="none" stroke="#000" stroke-width="1"/></svg>
<div style="left:784px;top:452px;width:44px;height:57px;border:2px solid #000;background:#f8f8f8"></div>
<div style="left:789px;top:457px;width:34px;height:34px;border:2px solid #000;background:#e4e4e4"></div>
<div style="left:788px;top:491px;font-size:11px;line-height:14px;color:#000">2</div>
<svg style="position:absolute;left:839px;top:471px" width="14" height="14"><circle cx="6" cy="6" r="5" fill="#fff" stroke="#000" stroke-width="1.5"/><path d="M6 1 A5 5 0 0 0 6 11Z" fill="#000"/></svg>
<div style="left:859px;top:476px;width:87px;height:2px;background:#909090"></div>
<svg style="position:absolute;left:941px;top:470px" width="8" height="15"><path d="M2 1.5 H5.5 V10 L2 13.5" fill="#f0f0f0" stroke="none"/><path d="M1.5 1 V11" stroke="#fff"/><path d="M5.5 1 V10.5 L2 14" fill="none" stroke="#606060" stroke-width="1.3"/></svg>
<div style="left:958px;top:471px;font-size:11px;line-height:13px;color:#111">100%</div>
<div style="left:770px;top:524px;width:235px;height:1px;background:#808080"></div>
<div style="left:771px;top:525px;width:234px;height:98px;background:#fff"></div>
<div style="left:782px;top:528px;width:32px;height:30px;background:radial-gradient(circle at 30% 40%,#e8f0f8,#d4e4f0 70%)"></div>
<div style="left:814px;top:528px;width:32px;height:30px;background:repeating-linear-gradient(45deg,rgba(160,170,220,.35) 0 1px,transparent 1px 3px),repeating-linear-gradient(-45deg,rgba(160,170,220,.35) 0 1px,transparent 1px 3px),#f4f6fa"></div>
<div style="left:846px;top:528px;width:32px;height:30px;background:radial-gradient(ellipse at 60% 40%,#fdf4e6,#f6e6cc 80%)"></div>
<div style="left:878px;top:528px;width:32px;height:30px;background:radial-gradient(ellipse at 30% 60%,#fdf4e6,#f6e6cc 80%)"></div>
<div style="left:910px;top:528px;width:32px;height:30px;background:linear-gradient(90deg,#ecc8dc 50%,#f8e4f8 50%) 0 0/32px 15px no-repeat,linear-gradient(90deg,#f8e4f8 50%,#ecc8dc 50%) 0 15px/32px 15px no-repeat"></div>
<div style="left:942px;top:528px;width:32px;height:30px;background:linear-gradient(90deg,#a4e0f8 50%,#d8eef8 50%) 0 0/32px 15px no-repeat,linear-gradient(90deg,#d8eef8 50%,#a4e0f8 50%) 0 15px/32px 15px no-repeat"></div>
<div style="left:782px;top:560px;width:32px;height:30px;background:linear-gradient(90deg,#ffe0a8 50%,#fff4dc 50%) 0 0/32px 15px no-repeat,linear-gradient(90deg,#fff4dc 50%,#ffe0a8 50%) 0 15px/32px 15px no-repeat"></div>
<div style="left:814px;top:560px;width:32px;height:30px;background:repeating-linear-gradient(0deg,rgba(200,230,180,.5) 0 3px,transparent 3px 10px),#f4fce8"></div>
<div style="left:846px;top:560px;width:32px;height:30px;background:repeating-linear-gradient(90deg,transparent 0 8px,rgba(240,150,30,.55) 8px 11px,transparent 11px 16px),repeating-linear-gradient(0deg,transparent 0 7px,rgba(240,150,30,.55) 7px 10px,transparent 10px 15px),#fff4a0"></div>
<div style="left:878px;top:560px;width:32px;height:30px;background:repeating-linear-gradient(90deg,transparent 0 5px,rgba(170,220,250,.8) 5px 9px,transparent 9px 11px),repeating-linear-gradient(0deg,transparent 0 4px,rgba(170,220,250,.8) 4px 8px,transparent 8px 10px),#fff070"></div>
<div style="left:910px;top:560px;width:32px;height:30px;background:repeating-linear-gradient(90deg,transparent 0 3px,rgba(120,90,40,.45) 3px 5px),repeating-linear-gradient(0deg,transparent 0 3px,rgba(220,40,0,.35) 3px 4px,transparent 4px 10px),#f8e020"></div>
<div style="left:942px;top:560px;width:32px;height:30px;background:repeating-linear-gradient(90deg,transparent 0 4px,rgba(230,150,60,.45) 4px 6px),repeating-linear-gradient(0deg,transparent 0 4px,rgba(230,150,60,.45) 4px 6px),#fff8f0"></div>
<div style="left:782px;top:592px;width:32px;height:30px;background:repeating-linear-gradient(90deg,rgba(0,140,0,.75) 0 5px,rgba(120,210,80,.5) 5px 10px),repeating-linear-gradient(0deg,#f8d800 0 4px,#40b040 4px 9px),#40b040"></div>
<div style="left:814px;top:592px;width:32px;height:30px;background:radial-gradient(circle,#3070e0 2px,transparent 3px) 0 0/11px 11px,repeating-linear-gradient(45deg,#f0f020 0 5px,#90d8f0 5px 8px)"></div>
<div style="left:846px;top:592px;width:32px;height:30px;background:repeating-linear-gradient(90deg,rgba(0,150,40,.8) 0 4px,transparent 4px 8px),repeating-linear-gradient(0deg,#d00000 0 5px,#20a030 5px 8px),#d00000"></div>
<div style="left:878px;top:592px;width:32px;height:30px;background:repeating-linear-gradient(0deg,#f04040 0 3px,#e83838 3px 5px)"></div>
<div style="left:910px;top:592px;width:32px;height:30px;background:linear-gradient(90deg,#4070e0,#6090f0 25%,#4070e0 50%,#3868d8)"></div>
<div style="left:942px;top:592px;width:32px;height:30px;background:repeating-linear-gradient(45deg,rgba(90,200,70,.55) 0 1px,transparent 1px 3px),repeating-linear-gradient(-30deg,rgba(10,70,10,.6) 0 1px,transparent 1px 4px),repeating-linear-gradient(80deg,rgba(120,220,90,.4) 0 1px,transparent 1px 5px),#2a8a2a"></div>
<svg style="position:absolute;left:0;top:0" width="1008" height="740"><rect x="920" y="567" width="3.5" height="3.5" fill="#403010"/><rect x="920" y="572" width="3.5" height="3.5" fill="#403010"/><rect x="920" y="577" width="3.5" height="3.5" fill="#403010"/><rect x="925" y="567" width="3.5" height="3.5" fill="#403010"/><rect x="925" y="572" width="3.5" height="3.5" fill="#403010"/><rect x="925" y="577" width="3.5" height="3.5" fill="#403010"/><rect x="930" y="567" width="3.5" height="3.5" fill="#403010"/><rect x="930" y="572" width="3.5" height="3.5" fill="#403010"/><rect x="930" y="577" width="3.5" height="3.5" fill="#403010"/><rect x="952" y="567" width="3.5" height="3.5" fill="#8a5a20"/><rect x="952" y="572" width="3.5" height="3.5" fill="#8a5a20"/><rect x="952" y="577" width="3.5" height="3.5" fill="#8a5a20"/><rect x="957" y="567" width="3.5" height="3.5" fill="#8a5a20"/><rect x="957" y="572" width="3.5" height="3.5" fill="#8a5a20"/><rect x="957" y="577" width="3.5" height="3.5" fill="#8a5a20"/><rect x="962" y="567" width="3.5" height="3.5" fill="#8a5a20"/><rect x="962" y="572" width="3.5" height="3.5" fill="#8a5a20"/><rect x="962" y="577" width="3.5" height="3.5" fill="#8a5a20"/></svg>
<div style="left:988px;top:526px;width:16px;height:97px;background:#f0f0f0"></div>
<svg style="position:absolute;left:990px;top:529px" width="12" height="10"><path d="M2 7 L6 3 L10 7" fill="none" stroke="#505050" stroke-width="2.2"/></svg>
<div style="left:988px;top:543px;width:15px;height:16px;background:#cdcdcd"></div>
<svg style="position:absolute;left:990px;top:610px" width="12" height="10"><path d="M2 3 L6 7 L10 3" fill="none" stroke="#505050" stroke-width="2.2"/></svg>
<div style="left:771px;top:623px;width:234px;height:1px;background:#e3e3e3"></div>
<div class="tab" style="left:767px;top:663px;width:241px;height:27px;border-width:1px 1px 2px 1px;border-color:#fff #fff #6d6d6d #fff"></div>
<svg style="position:absolute;left:819px;top:670px" width="17" height="17"><ellipse cx="8" cy="14" rx="7" ry="2.5" fill="#f0f000"/><path d="M4 14 L12 4" stroke="#000" stroke-width="2"/><path d="M11 5 L15 1" stroke="#a03020" stroke-width="2.5"/></svg>
<div style="left:842px;top:668px;font-size:16px;line-height:20px;color:#111;white-space:nowrap">ペイントツール</div>
<div class="tab" style="left:768px;top:690px;width:120px;height:22px;border-width:1px 2px 2px 1px;border-radius:0 0 3px 0"></div>
<svg style="position:absolute;left:801px;top:693px" width="16" height="15"><path d="M1 3 Q4 1 8 4 Q12 1 15 3 V13 Q12 11 8 14 Q4 11 1 13Z" fill="#fff" stroke="#000090" stroke-width="1.5"/><path d="M1 12 V14 H15 V12" fill="#000090"/></svg>
<div style="left:822px;top:691px;font-size:16px;line-height:20px;color:#111;white-space:nowrap">手順</div>
<div class="tab" style="left:889px;top:690px;width:118px;height:22px;border-width:1px 2px 2px 1px;border-radius:0 0 3px 0"></div>
<svg style="position:absolute;left:921px;top:692px" width="15" height="16" viewBox="0 0 16 16"><path d="M1.5 1.5 H11 L14.5 5 V15.5 H1.5 Z" fill="#fff" stroke="#000"/><circle cx="8" cy="9" r="5.8" fill="#1a4fb0"/><path d="M8 3.5 L12.5 8 L10 8 L11.5 10 L8.8 10 V14 H7.2 V10 H4.5 L6 8 H3.5 Z" fill="#10c010"/></svg>
<div style="left:942px;top:691px;font-size:16px;line-height:20px;color:#111;white-space:nowrap">作品</div>
<div class="tab" style="left:769px;top:712px;width:238px;height:23px;border-width:1px 2px 2px 1px;border-radius:0 0 3px 0"></div>
<svg style="position:absolute;left:837px;top:716px" width="16" height="15"><path d="M1 8 L4 1 L8 8Z" fill="#e01010"/><rect x="7" y="2" width="8" height="8" fill="#f0f000" stroke="#000"/><circle cx="7" cy="11" r="4" fill="#1010c0"/></svg>
<div style="left:859px;top:713px;font-size:16px;line-height:20px;color:#111;white-space:nowrap">ライブラリ</div>
<div style="left:766px;top:738px;width:242px;height:2px;background:#a0a0a0"></div>
</body></html>
